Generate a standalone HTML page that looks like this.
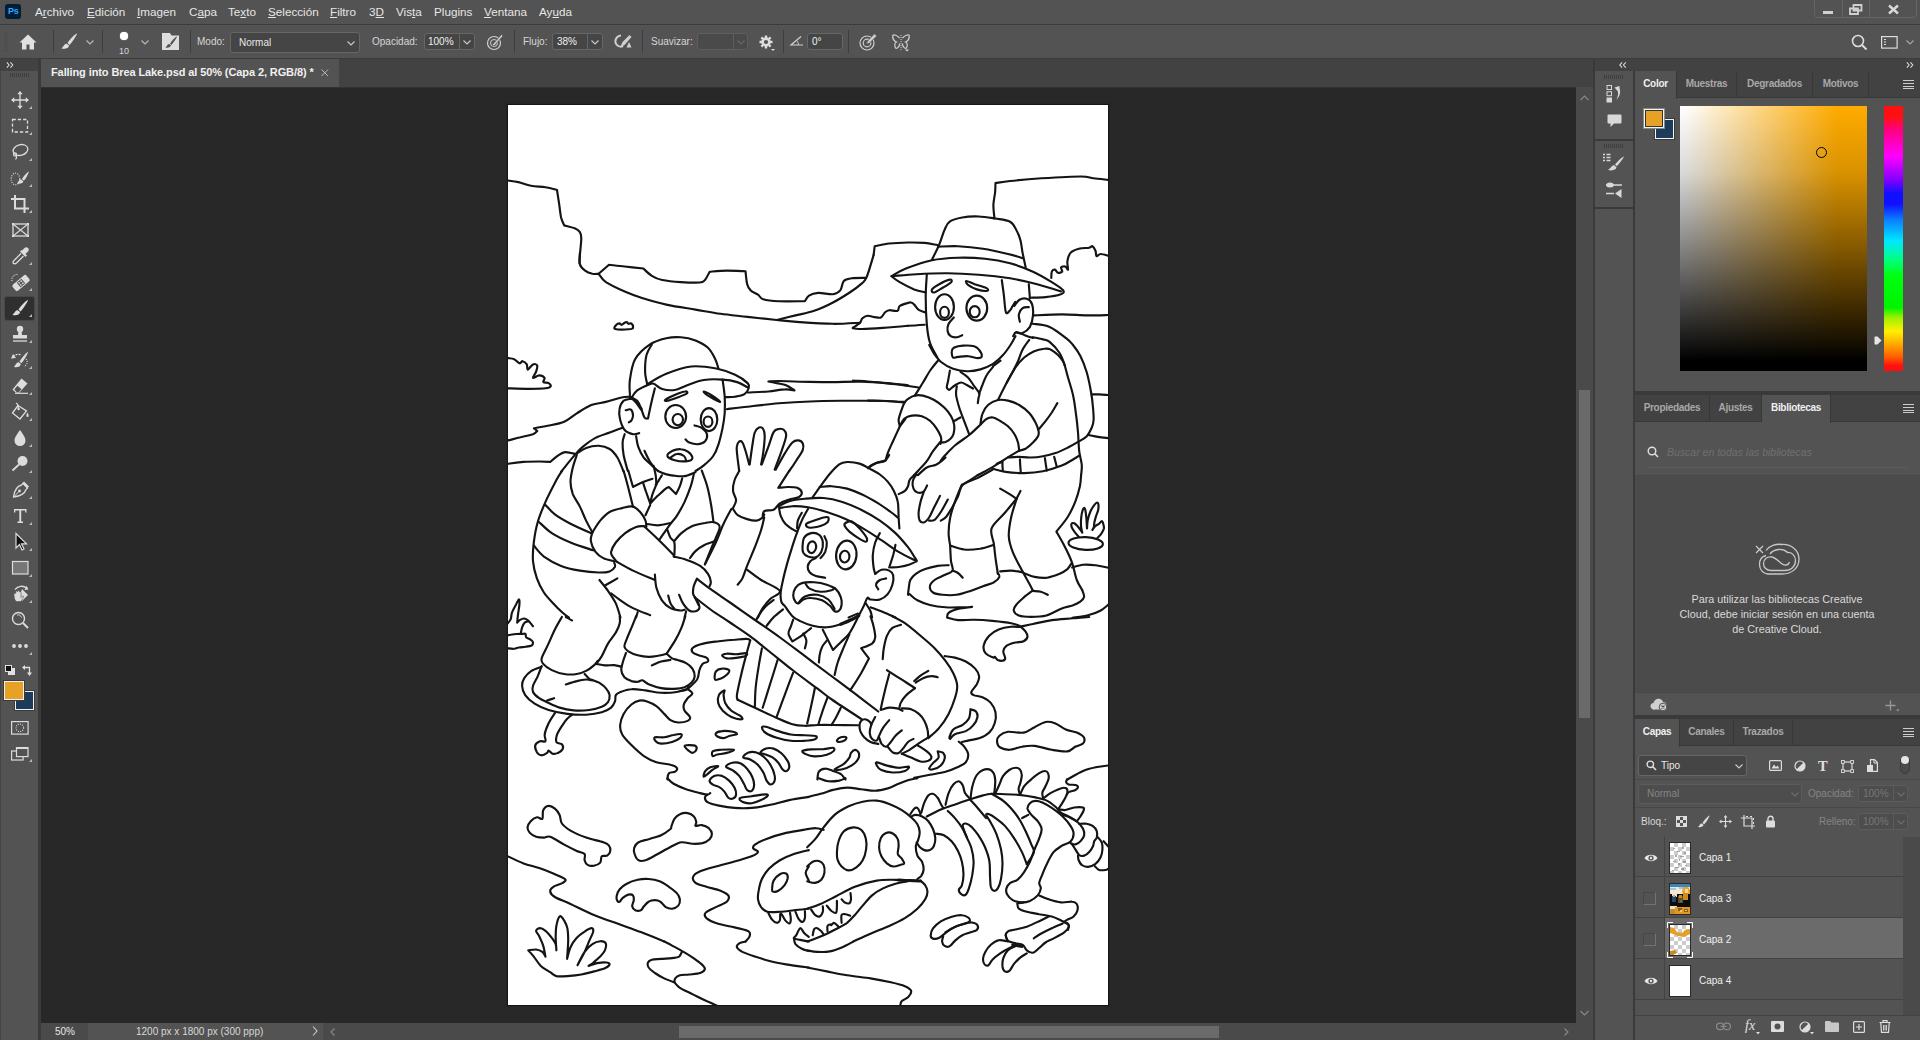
<!DOCTYPE html>
<html lang="es">
<head>
<meta charset="utf-8">
<title>Falling into Brea Lake.psd</title>
<style>
*{box-sizing:border-box;margin:0;padding:0}
html,body{width:1920px;height:1040px;overflow:hidden;background:#535353;font-family:"Liberation Sans",sans-serif;color:#dcdcdc;font-size:11px}
.a{position:absolute}
.t{position:absolute;white-space:nowrap;line-height:1}
#menubar{left:0;top:0;width:1920px;height:24px;background:#535353}
#menubar .t{font-size:11.7px;top:6px;color:#e6e6e6}
#menubar u{text-decoration:underline;text-underline-offset:1px}
#optbar{left:0;top:24px;width:1920px;height:35px;background:#535353;border-top:1px solid #3c3c3c;border-bottom:1px solid #3c3c3c}
#optbar .t{font-size:10px;color:#d6d6d6}
.sep{position:absolute;width:1px;background:#3e3e3e}
.box{position:absolute;background:#454545;border:1px solid #666;border-radius:3px}
#tabbar{left:41px;top:59px;width:1552px;height:28px;background:#424242}
#tab{left:41px;top:59px;width:298px;height:28px;background:#535353}
#canvasbg{left:41px;top:87px;width:1535px;height:936px;background:#282828}
#toolbar{left:0;top:59px;width:38px;height:981px;background:#535353}
#tbgap{left:38px;top:59px;width:3px;height:981px;background:#3a3a3a}
#statusbar{left:41px;top:1023px;width:1552px;height:17px;background:#4a4a4a}
#vscroll{left:1576px;top:87px;width:17px;height:936px;background:#4a4a4a}
#dockgap{left:1593px;top:59px;width:2px;height:981px;background:#3a3a3a}
#dockhead{left:1595px;top:59px;width:325px;height:12px;background:#424242}
#iconstrip{left:1595px;top:71px;width:38px;height:969px;background:#535353}
#stripgap{left:1633px;top:71px;width:2px;height:969px;background:#3a3a3a}
.panel{position:absolute;left:1635px;width:285px;background:#535353}
.ptabs{position:absolute;left:1635px;width:285px;height:27px;background:#424242;border-bottom:1px solid #383838}
.ptab{position:absolute;top:0;height:27px;font-weight:bold;font-size:10px;letter-spacing:-0.3px;color:#a8a8a8;line-height:26px;text-align:center;border-right:1px solid #383838;white-space:nowrap}
.ptab.on{background:#535353;color:#f0f0f0;height:28px}
.hamb{position:absolute;right:6px;top:9px;width:11px;height:9px;border-top:1px solid #ccc;border-bottom:1px solid #ccc}
.hamb:before{content:"";position:absolute;left:0;right:0;top:2px;height:1px;background:#ccc}
.hamb:after{content:"";position:absolute;left:0;right:0;top:5px;height:1px;background:#ccc}
svg{position:absolute;overflow:visible}
</style>
</head>
<body>
<div id="menubar" class="a">
<div class="a" style="left:5px;top:4px;width:16px;height:15px;background:#001e36;border-radius:3px"></div>
<div class="t" style="left:8px;top:7px;font-size:9px;font-weight:bold;color:#31a8ff;letter-spacing:-0.3px">Ps</div>
<div class="t" style="left:35px">A<u>r</u>chivo</div>
<div class="t" style="left:87px"><u>E</u>dición</div>
<div class="t" style="left:137px"><u>I</u>magen</div>
<div class="t" style="left:189px">C<u>a</u>pa</div>
<div class="t" style="left:228px">Te<u>x</u>to</div>
<div class="t" style="left:268px"><u>S</u>elección</div>
<div class="t" style="left:330px"><u>F</u>iltro</div>
<div class="t" style="left:369px">3<u>D</u></div>
<div class="t" style="left:396px">Vis<u>t</u>a</div>
<div class="t" style="left:434px">Plugins</div>
<div class="t" style="left:484px"><u>V</u>entana</div>
<div class="t" style="left:539px">Ay<u>u</u>da</div>
<div class="a" style="left:1814px;top:-4px;width:103px;height:22px;border:1px solid #666;border-radius:4px"></div>
<div class="a" style="left:1842px;top:0;width:1px;height:18px;background:#666"></div>
<div class="a" style="left:1869px;top:0;width:1px;height:18px;background:#666"></div>
<div class="a" style="left:1823px;top:11px;width:10px;height:3px;background:#d0d0d0"></div>
<svg style="left:1849px;top:4px" width="14" height="11" viewBox="0 0 14 11"><path d="M4.5 1h8v5.5h-8zM1 4.5h8v5.500h-8z" fill="#535353" stroke="#d0d0d0" stroke-width="1.8"/></svg>
<svg style="left:1888px;top:5px" width="11" height="9" viewBox="0 0 11 9"><path d="M1 0.500l9 8M10 0.500l-9 8" stroke="#d8d8d8" stroke-width="2.400" fill="none"/></svg>
</div>

<div id="optbar" class="a">
<svg style="left:4px;top:8px" width="4" height="20"><path d="M1 0v20M3 0v20" stroke="#444" stroke-width="1" stroke-dasharray="1 1"/></svg>
<svg style="left:19px;top:9px" width="18" height="16" viewBox="0 0 18 16"><path d="M9 0.500L0.500 8.500H3V15.500H7.500V10.500H10.500V15.500H15V8.500H17.500Z" fill="#e0e0e0"/></svg>
<div class="sep" style="left:53px;top:5px;height:23px"></div>
<svg style="left:61px;top:8px" width="17" height="17" viewBox="0 0 17 17"><path d="M15.500 0.500C12 3 8.500 7 6.500 10L8.500 12C11 9.500 14 5 16 1Z" fill="#ddd"/><path d="M5.800 10.800C3.500 10.500 3 13 0.500 15.500C4 16.500 8 15 8 12.500Z" fill="#ddd"/></svg>
<svg style="left:86px;top:15px" width="8" height="5" viewBox="0 0 8 5"><path d="M0.500 0.500L4 4L7.500 0.500" stroke="#bbb" fill="none" stroke-width="1.100"/></svg>
<div class="sep" style="left:102px;top:5px;height:23px"></div>
<div class="a" style="left:120px;top:7px;width:8px;height:8px;border-radius:50%;background:#fff;box-shadow:0 0 1px #fff"></div>
<div class="t" style="left:119px;top:22px;font-size:9px">10</div>
<svg style="left:141px;top:15px" width="8" height="5" viewBox="0 0 8 5"><path d="M0.500 0.500L4 4L7.500 0.500" stroke="#bbb" fill="none" stroke-width="1.100"/></svg>
<svg style="left:162px;top:8px" width="17" height="17" viewBox="0 0 17 17"><path d="M0 0H8L9.500 2.500H17V17H0Z" fill="#ddd"/><path d="M14.500 3.500C12 5.500 9.500 8 8 10.500L9.500 12C11.500 9.500 13.500 6.500 15 4Z" fill="#535353"/><path d="M7.500 11C5.500 10.800 5.500 12.500 3.500 14.500C6 15.200 9 14 9 12.500Z" fill="#535353"/></svg>
<div class="sep" style="left:190px;top:5px;height:23px"></div>
<div class="t" style="left:197px;top:12px">Modo:</div>
<div class="box" style="left:230px;top:7px;width:130px;height:21px"></div>
<div class="t" style="left:239px;top:13px;color:#e8e8e8">Normal</div>
<svg style="left:347px;top:16px" width="8" height="5" viewBox="0 0 8 5"><path d="M0.500 0.500L4 4L7.500 0.500" stroke="#ccc" fill="none" stroke-width="1.100"/></svg>
<div class="t" style="left:372px;top:12px">Opacidad:</div>
<div class="box" style="left:424px;top:8px;width:51px;height:17px"></div>
<div class="a" style="left:459px;top:9px;width:1px;height:15px;background:#666"></div>
<div class="t" style="left:428px;top:12px;color:#f0f0f0">100%</div>
<svg style="left:463px;top:15px" width="8" height="5" viewBox="0 0 8 5"><path d="M0.500 0.500L4 4L7.500 0.500" stroke="#ccc" fill="none" stroke-width="1.100"/></svg>
<svg style="left:486px;top:8px" width="18" height="18" viewBox="0 0 18 18"><circle cx="8" cy="10" r="6.500" fill="none" stroke="#d0d0d0" stroke-width="1.200"/><circle cx="8" cy="10" r="3.500" fill="none" stroke="#d0d0d0" stroke-width="1"/><path d="M6 12L15.500 1.500L17 3L8 13Z" fill="#d0d0d0" stroke="#535353" stroke-width="0.800"/></svg>
<div class="sep" style="left:514px;top:5px;height:23px"></div>
<div class="t" style="left:523px;top:12px">Flujo:</div>
<div class="box" style="left:552px;top:8px;width:51px;height:17px"></div>
<div class="a" style="left:587px;top:9px;width:1px;height:15px;background:#666"></div>
<div class="t" style="left:557px;top:12px;color:#f0f0f0">38%</div>
<svg style="left:591px;top:15px" width="8" height="5" viewBox="0 0 8 5"><path d="M0.500 0.500L4 4L7.500 0.500" stroke="#ccc" fill="none" stroke-width="1.100"/></svg>
<svg style="left:613px;top:8px" width="20" height="18" viewBox="0 0 20 18"><path d="M8 2.500C3 3 1 8 3.500 11.500C5 13.500 8 14 10 13" fill="none" stroke="#d0d0d0" stroke-width="2"/><path d="M7 15L9.500 9L16.500 2L18.500 4L12 11.500Z" fill="#d0d0d0"/><path d="M16 9L18.500 14.500H13.500Z" fill="#d0d0d0"/></svg>
<div class="sep" style="left:642px;top:5px;height:23px"></div>
<div class="t" style="left:651px;top:12px">Suavizar:</div>
<div class="a" style="left:697px;top:8px;width:51px;height:17px;background:#4a4a4a;border:1px solid #5e5e5e;border-radius:3px"></div>
<div class="a" style="left:733px;top:9px;width:1px;height:15px;background:#5e5e5e"></div>
<svg style="left:737px;top:15px" width="8" height="5" viewBox="0 0 8 5"><path d="M0.500 0.500L4 4L7.500 0.500" stroke="#666" fill="none" stroke-width="1.100"/></svg>
<svg style="left:759px;top:10px" width="16" height="16" viewBox="0 0 16 16"><g transform="translate(7 7)"><circle r="3.400" fill="none" stroke="#ddd" stroke-width="2.600"/><g stroke="#ddd" stroke-width="2.400"><path d="M0 -6.500V-4M0 6.500V4M-6.500 0H-4M6.500 0H4M-4.600 -4.600L-3 -3M4.600 4.600L3 3M-4.600 4.600L-3 3M4.600 -4.600L3 -3"/></g></g><path d="M12 14h4l-2 2z" fill="#ddd"/></svg>
<div class="sep" style="left:783px;top:5px;height:23px"></div>
<svg style="left:790px;top:11px" width="14" height="10" viewBox="0 0 14 10"><path d="M11 0.500L1 9H13" fill="none" stroke="#d0d0d0" stroke-width="1.200"/><path d="M6.500 4.500C8 5.500 8.500 7.500 8.300 9" fill="none" stroke="#d0d0d0" stroke-width="1"/></svg>
<div class="box" style="left:807px;top:8px;width:36px;height:17px"></div>
<div class="t" style="left:812px;top:12px;color:#f0f0f0">0°</div>
<div class="sep" style="left:848px;top:5px;height:23px"></div>
<svg style="left:859px;top:8px" width="19" height="18" viewBox="0 0 19 18"><circle cx="8" cy="10" r="7" fill="none" stroke="#d0d0d0" stroke-width="1.200"/><circle cx="8" cy="10" r="3.800" fill="none" stroke="#d0d0d0" stroke-width="1.200"/><path d="M7 11.500L8.500 8L15.500 0.800L17.800 3L10.500 10Z" fill="#d0d0d0" stroke="#535353" stroke-width="0.800"/></svg>
<svg style="left:892px;top:9px" width="18" height="18" viewBox="0 0 18 18"><path d="M7.500 4C5 1 2 0.500 0.800 1.200C0.500 4 2 7 4.500 8C2.500 9 2 12 4 14.500C6 14.500 7.500 12 7.500 9.500" fill="none" stroke="#d0d0d0" stroke-width="1.200"/><path d="M10.500 4C13 1 16 0.500 17.200 1.200C17.500 4 16 7 13.500 8C15.500 9 16 12 14 14.500C12 14.500 10.500 12 10.500 9.500" fill="none" stroke="#d0d0d0" stroke-width="1.200"/><path d="M9 1V16" stroke="#d0d0d0" stroke-width="1" stroke-dasharray="1 1"/><path d="M13 15.500h4l-2 2z" fill="#ddd"/></svg>
<svg style="left:1851px;top:9px" width="17" height="17" viewBox="0 0 17 17"><circle cx="7" cy="7" r="5.500" fill="none" stroke="#ddd" stroke-width="1.600"/><path d="M11 11L15.500 15.500" stroke="#ddd" stroke-width="2"/></svg>
<svg style="left:1881px;top:11px" width="17" height="13" viewBox="0 0 17 13"><rect x="0.600" y="0.600" width="15.500" height="11.500" fill="none" stroke="#ddd" stroke-width="1.200"/><path d="M3 3.500h2M3 6h2M3 8.500h2" stroke="#ddd" stroke-width="1.200"/></svg>
<svg style="left:1906px;top:15px" width="8" height="5" viewBox="0 0 8 5"><path d="M0.500 0.500L4 4L7.500 0.500" stroke="#aaa" fill="none" stroke-width="1.100"/></svg>
</div>

<div id="tabbar" class="a"></div>
<div id="tab" class="a"></div>
<div class="t" id="tabtitle" style="left:51px;top:67px;font-size:11px;font-weight:bold;color:#f0f0f0;letter-spacing:-0.1px">Falling into Brea Lake.psd al 50% (Capa 2, RGB/8) *</div>
<svg style="left:321px;top:69px" width="8" height="8" viewBox="0 0 8 8"><path d="M0.500 0.500L7 7M7 0.500L0.500 7" stroke="#bbb" stroke-width="1" fill="none"/></svg>

<div id="toolbar" class="a"></div>
<div class="a" style="left:0;top:59px;width:1px;height:981px;background:#444"></div>
<div id="tbgap" class="a"></div>
<div class="a" style="left:0;top:59px;width:38px;height:12px;background:#424242"></div>
<svg style="left:6px;top:62px" width="8" height="6" viewBox="0 0 9 7"><path d="M0.800 0.500L3.500 3.500L0.800 6.500M5 0.500L7.800 3.500L5 6.500" stroke="#e0e0e0" stroke-width="1.200" fill="none"/></svg>
<svg style="left:10px;top:73px" width="20" height="4"><path d="M0.500 0v4M2.500 0v4M4.500 0v4M6.500 0v4M8.500 0v4M10.500 0v4M12.500 0v4M14.500 0v4M16.500 0v4M18.500 0v4" stroke="#3f3f3f" stroke-width="1"/></svg>
<div class="a" style="left:4px;top:296px;width:31px;height:25px;background:#2f2f2f;border:1px solid #484848;border-radius:3px"></div>
<svg style="left:10px;top:90px" width="20" height="20" viewBox="0 0 20 20"><path d="M10 2.500V17.500M2.500 10H17.500" stroke="#dcdcdc" stroke-width="1.300" fill="none"/><path d="M10 1L12.700 4.300H7.300ZM10 19L12.700 15.700H7.300ZM1 10L4.300 7.300V12.700ZM19 10L15.700 7.300V12.700Z" fill="#dcdcdc"/></svg>
<svg style="left:29px;top:106px" width="3" height="3" viewBox="0 0 3 3"><path d="M3 0V3H0Z" fill="#bbb"/></svg>
<svg style="left:10px;top:116px" width="20" height="20" viewBox="0 0 20 20"><rect x="2.500" y="3.500" width="15" height="12.500" fill="none" stroke="#dcdcdc" stroke-width="1.300" stroke-dasharray="3.300 2"/></svg>
<svg style="left:29px;top:132px" width="3" height="3" viewBox="0 0 3 3"><path d="M3 0V3H0Z" fill="#bbb"/></svg>
<svg style="left:10px;top:142px" width="20" height="20" viewBox="0 0 20 20"><ellipse cx="10.500" cy="8" rx="7.500" ry="5.300" transform="rotate(-15 10.500 8)" fill="none" stroke="#dcdcdc" stroke-width="1.300"/><circle cx="5" cy="12.500" r="1.600" fill="none" stroke="#dcdcdc" stroke-width="1.100"/><path d="M6 13.500C7 15 6.500 16.500 5.500 17.500" stroke="#dcdcdc" stroke-width="1.100" fill="none"/></svg>
<svg style="left:29px;top:158px" width="3" height="3" viewBox="0 0 3 3"><path d="M3 0V3H0Z" fill="#bbb"/></svg>
<svg style="left:10px;top:168px" width="20" height="20" viewBox="0 0 20 20"><ellipse cx="5.500" cy="11" rx="4.300" ry="5.800" fill="none" stroke="#dcdcdc" stroke-width="1.200" stroke-dasharray="1 1.300"/><path d="M18.500 3.500C16 5.500 13.500 8.500 12 11L13.800 12.800C15.800 10.500 17.800 7 18.800 4Z" fill="#dcdcdc"/><path d="M11.300 11.600C9 11.300 9 13.500 7 15.500C10 16.500 13.500 15 13.300 13.500Z" fill="#dcdcdc"/></svg>
<svg style="left:29px;top:184px" width="3" height="3" viewBox="0 0 3 3"><path d="M3 0V3H0Z" fill="#bbb"/></svg>
<svg style="left:10px;top:194px" width="20" height="20" viewBox="0 0 20 20"><path d="M5 1V14.500H19M1 5H14.500V19" fill="none" stroke="#dcdcdc" stroke-width="2"/></svg>
<svg style="left:29px;top:210px" width="3" height="3" viewBox="0 0 3 3"><path d="M3 0V3H0Z" fill="#bbb"/></svg>
<svg style="left:10px;top:220px" width="20" height="20" viewBox="0 0 20 20"><rect x="3" y="4" width="15" height="12" fill="none" stroke="#dcdcdc" stroke-width="1.300"/><path d="M3 4L18 16M18 4L3 16" stroke="#dcdcdc" stroke-width="1.100"/><rect x="2" y="3" width="2" height="2" fill="#dcdcdc"/><rect x="17" y="3" width="2" height="2" fill="#dcdcdc"/><rect x="2" y="15" width="2" height="2" fill="#dcdcdc"/><rect x="17" y="15" width="2" height="2" fill="#dcdcdc"/></svg>
<svg style="left:10px;top:246px" width="20" height="20" viewBox="0 0 20 20"><path d="M11 7.500L4 14.500C3 15.500 3 17 3.500 17.500C4.500 18 5.500 17.800 6.500 17L13.500 10" fill="none" stroke="#dcdcdc" stroke-width="1.300"/><path d="M10 5.500L15.500 11L17 9.500L15.500 8L18 5.500C19 4.500 19 3 18 2C17 1 15.500 1 14.500 2L12 4.500L11.500 4Z" fill="#dcdcdc"/></svg>
<svg style="left:29px;top:262px" width="3" height="3" viewBox="0 0 3 3"><path d="M3 0V3H0Z" fill="#bbb"/></svg>
<svg style="left:10px;top:272px" width="20" height="20" viewBox="0 0 20 20"><g transform="rotate(-40 11 11)"><rect x="2" y="7" width="18" height="8" rx="2" fill="#dcdcdc"/><rect x="8" y="8" width="6" height="6" fill="#535353"/><circle cx="9.700" cy="9.700" r="0.900" fill="#dcdcdc"/><circle cx="12.300" cy="9.700" r="0.900" fill="#dcdcdc"/><circle cx="9.700" cy="12.300" r="0.900" fill="#dcdcdc"/><circle cx="12.300" cy="12.300" r="0.900" fill="#dcdcdc"/></g><path d="M2 9C1.500 5 4 2 8.500 2.500" fill="none" stroke="#dcdcdc" stroke-width="1.100" stroke-dasharray="1 1.200"/></svg>
<svg style="left:29px;top:288px" width="3" height="3" viewBox="0 0 3 3"><path d="M3 0V3H0Z" fill="#bbb"/></svg>
<svg style="left:10px;top:298px" width="20" height="20" viewBox="0 0 20 20"><path d="M17.500 2C14 4.500 10.500 8.500 8.500 11.500L10.500 13.500C13 11 16 6.500 18 2.500Z" fill="#dcdcdc"/><path d="M7.800 12.300C5.500 12 5 14.500 2.500 17C6 18 10 16.500 10 14Z" fill="#dcdcdc"/></svg>
<svg style="left:29px;top:314px" width="3" height="3" viewBox="0 0 3 3"><path d="M3 0V3H0Z" fill="#bbb"/></svg>
<svg style="left:10px;top:324px" width="20" height="20" viewBox="0 0 20 20"><circle cx="10" cy="5" r="3.200" fill="#dcdcdc"/><path d="M8.500 7H11.500L12 11H17V14.500H3V11H8Z" fill="#dcdcdc"/><path d="M3 17H17" stroke="#dcdcdc" stroke-width="1.300"/></svg>
<svg style="left:29px;top:340px" width="3" height="3" viewBox="0 0 3 3"><path d="M3 0V3H0Z" fill="#bbb"/></svg>
<svg style="left:10px;top:350px" width="20" height="20" viewBox="0 0 20 20"><path d="M17.500 2C14.500 4.500 11.500 8.500 9.500 11.500L11.300 13.300C13.500 11 16.300 6.500 18 2.500Z" fill="#dcdcdc"/><path d="M8.800 12.300C6.500 12 6 14.500 4 17C7 18 10.800 16.500 10.800 14Z" fill="#dcdcdc"/><path d="M3 6.500C6 4 9 4 11.500 5" fill="none" stroke="#dcdcdc" stroke-width="1.200" stroke-dasharray="2 1"/><path d="M1 8.500L3 4L6 8Z" fill="#dcdcdc"/><path d="M16 9C18 11 17.500 15 14 16.500" fill="none" stroke="#dcdcdc" stroke-width="1.100" stroke-dasharray="1 1.200"/></svg>
<svg style="left:29px;top:366px" width="3" height="3" viewBox="0 0 3 3"><path d="M3 0V3H0Z" fill="#bbb"/></svg>
<svg style="left:10px;top:376px" width="20" height="20" viewBox="0 0 20 20"><path d="M11.500 2.500L17.500 7.500L9.500 16.500H5.500L2.500 13.500Z" fill="#dcdcdc"/><path d="M4.300 13.500L7.500 9.800L11.500 13.300L9 16H6.500Z" fill="#535353"/><path d="M5 17.300H18" stroke="#dcdcdc" stroke-width="1.200"/></svg>
<svg style="left:29px;top:392px" width="3" height="3" viewBox="0 0 3 3"><path d="M3 0V3H0Z" fill="#bbb"/></svg>
<svg style="left:10px;top:402px" width="20" height="20" viewBox="0 0 20 20"><path d="M8 3.500L16.500 9L10 17L2.500 11Z" fill="none" stroke="#dcdcdc" stroke-width="1.300"/><path d="M6 1.500C7 1 8 2.500 8.500 6.500" fill="none" stroke="#dcdcdc" stroke-width="1.200"/><circle cx="8.600" cy="7" r="1.200" fill="#dcdcdc"/><path d="M17.500 10.500C19 13 19 15 17.500 15C16 15 16 13 17.500 10.500Z" fill="#dcdcdc"/></svg>
<svg style="left:29px;top:418px" width="3" height="3" viewBox="0 0 3 3"><path d="M3 0V3H0Z" fill="#bbb"/></svg>
<svg style="left:10px;top:428px" width="20" height="20" viewBox="0 0 20 20"><path d="M10 2C13 6.500 15.500 9.500 15.500 12.500A5.500 5.500 0 0 1 4.500 12.500C4.500 9.500 7 6.500 10 2Z" fill="#dcdcdc"/></svg>
<svg style="left:29px;top:444px" width="3" height="3" viewBox="0 0 3 3"><path d="M3 0V3H0Z" fill="#bbb"/></svg>
<svg style="left:10px;top:454px" width="20" height="20" viewBox="0 0 20 20"><circle cx="12.500" cy="7" r="5" fill="#dcdcdc"/><path d="M9 10.500L2.500 16.500" stroke="#dcdcdc" stroke-width="1.800"/></svg>
<svg style="left:29px;top:470px" width="3" height="3" viewBox="0 0 3 3"><path d="M3 0V3H0Z" fill="#bbb"/></svg>
<svg style="left:10px;top:480px" width="20" height="20" viewBox="0 0 20 20"><path d="M13 3.500L17.500 8L16 9.500C15 13 11 16 3.500 17C4.500 10 7.500 6 11.500 5Z" fill="none" stroke="#dcdcdc" stroke-width="1.300"/><path d="M14 1.500L19 6.500L17.500 8L12.500 3Z" fill="#dcdcdc"/><circle cx="9.500" cy="11" r="1.400" fill="#dcdcdc"/><path d="M4 16.500L9 11.500" stroke="#dcdcdc" stroke-width="1"/></svg>
<svg style="left:29px;top:496px" width="3" height="3" viewBox="0 0 3 3"><path d="M3 0V3H0Z" fill="#bbb"/></svg>
<svg style="left:10px;top:506px" width="20" height="20" viewBox="0 0 20 20"><path d="M4 3H16.500V6.500H15.200V4.600H11.200V15.500H13V17H7.500V15.500H9.300V4.600H5.300V6.500H4Z" fill="#dcdcdc"/></svg>
<svg style="left:29px;top:522px" width="3" height="3" viewBox="0 0 3 3"><path d="M3 0V3H0Z" fill="#bbb"/></svg>
<svg style="left:10px;top:532px" width="20" height="20" viewBox="0 0 20 20"><path d="M6 1.500V16L9.500 12.500L12 18L14 17L11.500 11.800H16.500Z" fill="#111" stroke="#dcdcdc" stroke-width="1.200"/></svg>
<svg style="left:29px;top:548px" width="3" height="3" viewBox="0 0 3 3"><path d="M3 0V3H0Z" fill="#bbb"/></svg>
<svg style="left:10px;top:558px" width="20" height="20" viewBox="0 0 20 20"><rect x="2.500" y="3.500" width="15.500" height="12.500" fill="#777" stroke="#dcdcdc" stroke-width="1.200"/></svg>
<svg style="left:29px;top:574px" width="3" height="3" viewBox="0 0 3 3"><path d="M3 0V3H0Z" fill="#bbb"/></svg>
<svg style="left:10px;top:584px" width="20" height="20" viewBox="0 0 20 20"><path d="M5 5.500C8 1.500 13.500 1.500 16.500 4" fill="none" stroke="#dcdcdc" stroke-width="1.300"/><path d="M18.500 5.500L14.500 6L16.500 1.800Z" fill="#dcdcdc"/><path d="M12 5L18 11L12 17L9 14" fill="#dcdcdc"/><path d="M4 11.500V9.500Q5 8.500 5.800 9.500V7.500Q6.800 6.500 7.600 7.500V7Q8.600 6 9.400 7V7.800Q10.400 7 11 8V13.500L12.500 12Q13.800 11.800 13.500 13L11 17.500H6Q4 15 4 11.500Z" fill="#dcdcdc" stroke="#535353" stroke-width="0.600"/></svg>
<svg style="left:29px;top:600px" width="3" height="3" viewBox="0 0 3 3"><path d="M3 0V3H0Z" fill="#bbb"/></svg>
<svg style="left:10px;top:610px" width="20" height="20" viewBox="0 0 20 20"><circle cx="8.500" cy="8.500" r="6" fill="none" stroke="#dcdcdc" stroke-width="1.400"/><path d="M13 13L18 18" stroke="#dcdcdc" stroke-width="2"/><path d="M7 5C9 4.500 11 5.500 11.500 7.500" fill="none" stroke="#dcdcdc" stroke-width="0.900"/></svg>
<svg style="left:10px;top:636px" width="20" height="20" viewBox="0 0 20 20"><circle cx="4" cy="10" r="1.900" fill="#dcdcdc"/><circle cx="10" cy="10" r="1.900" fill="#dcdcdc"/><circle cx="16" cy="10" r="1.900" fill="#dcdcdc"/></svg>
<svg style="left:29px;top:652px" width="3" height="3" viewBox="0 0 3 3"><path d="M3 0V3H0Z" fill="#bbb"/></svg>
<div class="a" style="left:8px;top:668px;width:7px;height:7px;background:#e0e0e0"></div>
<div class="a" style="left:5px;top:665px;width:7px;height:7px;background:#111;border:1px solid #e0e0e0"></div>
<svg style="left:22px;top:665px" width="11" height="11" viewBox="0 0 11 11"><path d="M2.500 2.500H7.500V8" fill="none" stroke="#e0e0e0" stroke-width="1.300"/><path d="M0 2.500L3 0V5ZM7.500 11L5 7.500H10Z" fill="#e0e0e0"/></svg>
<div class="a" style="left:15px;top:691px;width:19px;height:19px;background:#1d3c5c;border:1px solid #f0f0f0;box-shadow:0 0 0 1px #3a3a3a"></div>
<div class="a" style="left:4px;top:681px;width:20px;height:19px;background:#e8a127;border:1px solid #f0f0f0;box-shadow:0 0 0 1px #3a3a3a"></div>
<svg style="left:11px;top:721px" width="18" height="14" viewBox="0 0 18 14"><rect x="0.600" y="0.600" width="16.500" height="12.500" fill="none" stroke="#dcdcdc" stroke-width="1.200"/><circle cx="8.800" cy="6.800" r="3.800" fill="none" stroke="#dcdcdc" stroke-width="1.100" stroke-dasharray="1 1.200"/></svg>
<svg style="left:11px;top:747px" width="18" height="14" viewBox="0 0 18 14"><rect x="0.600" y="4" width="11.500" height="9" fill="none" stroke="#dcdcdc" stroke-width="1.200"/><rect x="5.500" y="0.600" width="11.500" height="9" fill="#535353" stroke="#dcdcdc" stroke-width="1.200"/><path d="M5.500 1.200H17" stroke="#dcdcdc" stroke-width="1.600"/></svg>
<svg style="left:29px;top:759px" width="3" height="3" viewBox="0 0 3 3"><path d="M3 0V3H0Z" fill="#bbb"/></svg>

<div id="canvasbg" class="a"></div>
<div class="a" style="left:41px;top:87px;width:1552px;height:1px;background:#323232"></div>
<div class="a" style="left:507px;top:104px;width:602px;height:902px;background:#161616;box-shadow:0 0 2px #1c1c1c"></div>
<div class="a" style="left:508px;top:105px;width:600px;height:900px;background:#fff;overflow:hidden">
<svg width="600" height="900" viewBox="0 0 600 900" style="left:0;top:0" fill="none" stroke="#141414" stroke-width="2.15" stroke-linecap="round" stroke-linejoin="round">
<path d="M-1 75.4C0.9 75.7 6.4 76.2 10.4 77.1C14.4 78 18.4 80 22.9 80.8C27.4 81.7 33.2 81.6 37.5 82.3C41.8 83 47 84.5 49 85C49.3 87.2 50.3 93.3 51 97.9C51.7 102.5 52.3 108.8 53.1 112.5C54 116.2 55.7 119.1 56.2 120.4C58 120.9 64.1 122.2 66.7 123.3C69.3 124.4 70.8 125.4 71.9 127.1C73 128.8 73.3 129.5 73.3 133.3C73.3 137.2 72.2 145.8 71.9 150C71.6 154.2 71.5 156.9 71.5 158.3"/>
<path d="M424 154.6C425.2 152.1 429.2 144.5 431.2 139.6C433.3 134.7 434.7 128.8 436.5 125C438.2 121.2 438.7 118.8 441.7 116.7C444.6 114.6 449.3 113.4 454.2 112.5C459 111.6 465.3 111.3 470.8 111.5C476.4 111.6 482.3 112.7 487.5 113.5C492.7 114.4 498.6 114.8 502.1 116.7C505.6 118.6 506.6 121.9 508.3 125C510.1 128.1 511.5 131.6 512.5 135.4C513.5 139.2 513.7 143.4 514.6 147.9C515.5 152.4 517.2 160.1 517.7 162.5"/>
<path d="M430.2 141.7C433.5 141.6 442.5 140.9 450 141.2C457.5 141.6 466.7 142.5 475 143.8C483.3 145 493.4 147.4 500 149C506.6 150.5 512.2 152.4 514.6 153.1"/>
<path d="M417.7 187.5C415.8 187 410.6 186.1 406.2 184.4C401.9 182.6 395.5 179.3 391.7 177.1C387.8 174.9 384.7 172.2 383.3 171.2C385.8 170 391.1 166.2 397.9 163.5C404.7 160.9 415.3 157 424 155.2C432.6 153.4 441.1 153 450 152.7C458.9 152.5 468.4 152.8 477.1 153.8C485.8 154.7 494.1 156.2 502.1 158.3C510.1 160.5 518.1 163.5 525 166.7C531.9 169.8 538.7 174 543.8 177.1C548.8 180.2 553.8 183.3 555.2 185.4C556.6 187.5 555 188.5 552.1 189.6C549.1 190.7 542.5 191.6 537.5 192.1C532.5 192.6 524.5 192.6 521.9 192.7"/>
<path d="M384.4 171.2C388.4 170.9 399.1 169.7 408.3 169.2C417.5 168.7 429.2 168.2 439.6 168.3C450 168.4 460.4 169 470.8 169.8C481.3 170.6 492.4 171.8 502.1 173.3C511.8 174.9 520.7 177 529.2 179.2C537.7 181.4 549.1 185.2 553.1 186.5"/>
<path d="M365.6 150C365.8 148.5 366.5 142.7 366.7 141.2C369.1 140.8 375.7 139.2 381.2 138.5C386.8 137.9 394.1 137.6 400 137.5C405.9 137.4 411.8 137.5 416.7 137.9C421.5 138.3 427.1 139.7 429.2 140"/>
<path d="M486.5 113.5C486.3 111.3 485.3 104.3 485.4 100C485.5 95.7 486.7 91.1 487.1 87.5C487.4 83.9 487.4 79.7 487.5 78.1C489.9 77.8 494.4 76.8 502.1 76C509.7 75.2 521.5 74.1 533.3 73.3C545.1 72.6 564.2 71.5 572.9 71.5C581.6 71.5 580.7 72.7 585.4 73.3C590.1 73.9 598.4 74.7 601 75"/>
<path d="M543.3 172.9C543.4 171.9 543.2 168.1 543.8 166.7C544.3 165.3 545.8 164.4 546.9 164.6C547.9 164.8 548.8 167.4 550 167.7C551.2 168.1 553.6 167.5 554.2 166.7C554.7 165.8 552.6 163.4 553.1 162.5C553.6 161.6 556.1 161.1 557.3 161.5C558.4 161.8 559.7 165.5 560 164.6C560.3 163.7 559 159 559.4 156.2C559.8 153.5 560.6 150 562.5 147.9C564.4 145.8 567.7 144.6 570.8 143.8C574 142.9 579 143.1 581.2 142.7C583.5 142.3 583.3 140.7 584.4 141.2C585.4 141.8 586.8 144.2 587.5 145.8C588.2 147.5 587.7 150.5 588.5 151C589.4 151.6 590.6 149 592.7 149C594.8 149 599.7 150.7 601 151"/>
<path d="M71.9 147.9C71.9 149.8 71 156.4 71.9 159.4C72.7 162.3 75 164.1 77.1 165.6C79.2 167.2 82.1 168.2 84.4 168.8C86.6 169.3 89.6 168.8 90.6 168.8C92.4 167.3 99.3 161.3 101 159.8C103.6 160.1 110.9 160.8 116.7 161.5C122.4 162.1 132.3 163.2 135.4 163.5C136.8 164.8 140.6 168.9 143.8 170.8C146.9 172.7 149.3 174 154.2 175C159 176 166.7 176.7 172.9 177.1C179.2 177.5 187.7 177.8 191.7 177.5C195.7 177.2 195.2 176.8 196.9 175C198.5 173.2 200.9 168.1 201.7 166.7C204.5 166.5 212.8 165.7 218.8 165.6C224.7 165.6 234.4 166.1 237.5 166.2C237.8 168.4 238.3 176 239.2 179.2C240 182.4 240.9 183.7 242.7 185.4C244.5 187.2 247.9 188.1 250 189.6C252.1 191 251.7 193.1 255.2 194.2C258.7 195.3 263.9 195.9 270.8 196.2C277.8 196.6 292.5 196.2 296.9 196.2C297.6 195.3 298.8 192 301 190.6C303.3 189.2 306.4 188.2 310.4 187.9C314.4 187.7 321.4 189.6 325 189.2C328.6 188.8 330.5 187.6 332.3 185.4C334.1 183.2 333.9 178.1 335.8 176C337.7 174 340.2 173.9 343.8 173.3C347.3 172.8 355 173 357.3 172.9"/>
<path d="M90.6 168.8C91.8 170.1 93.6 174.1 97.9 177.1C102.3 180 110.8 183.9 116.7 186.5C122.6 189.1 126.4 190.5 133.3 192.7C140.3 194.9 149.3 197.6 158.3 199.6C167.4 201.6 178.5 203.1 187.5 204.6C196.5 206.1 203.8 207.5 212.5 208.8C221.2 210 230.2 210.8 239.6 211.9C249 212.9 260.1 214.1 268.8 215C277.4 215.9 282.3 216.5 291.7 217.1C301 217.7 314.9 218.6 325 218.8C335.1 218.9 347.6 217.9 352.1 217.7"/>
<path d="M268.8 215C271.9 214.2 281.2 211.9 287.5 210.4C293.8 208.9 300 208 306.2 205.8C312.5 203.7 319.1 200.6 325 197.5C330.9 194.4 336.8 190.7 341.7 187.5C346.5 184.3 351.4 180.6 354.2 178.1C356.9 175.7 356.9 175.9 358.3 172.9C359.7 170 361.3 164.2 362.5 160.4C363.7 156.6 365.1 151.7 365.6 150"/>
<path d="M107.3 224C104.9 223.3 107.6 220.7 108.3 219.8C109 218.9 110.6 218.3 111.5 218.3C112.3 218.3 112.7 219.9 113.5 219.8C114.4 219.7 115.8 218.2 116.7 217.7C117.5 217.3 118.1 216.9 118.8 217.1C119.4 217.3 119.7 218.5 120.4 218.8C121.2 219 122.6 217.8 123.3 218.3C124.1 218.9 125.1 220.9 125 221.9C124.9 222.8 125.9 223.6 122.9 224C120 224.3 109.7 224.7 107.3 224Z"/>
<path d="M344.8 222.9C346 222 350.5 219.3 352.1 217.7C353.6 216.1 353 214.7 354.2 213.5C355.4 212.4 357.3 211.1 359.4 210.8C361.5 210.6 364.4 211.8 366.7 212.1C368.9 212.4 371.2 213.3 372.9 212.5C374.7 211.7 375.7 208.5 377.1 207.3C378.5 206.1 379.2 205.5 381.2 205.2C383.3 205 387.8 206.5 389.6 205.8C391.3 205.1 389.9 202.4 391.7 201C393.4 199.7 398.6 198.4 400 197.9"/>
<path d="M344.8 223.3C346.4 223.4 349.1 224 354.2 224C359.2 223.9 367.4 223.4 375 222.9C382.6 222.4 395.8 221.2 400 220.8"/>
<path d="M0 253.1C1 253.3 4.3 253.3 6.2 254.2C8.2 255 10.1 258 11.5 258.3C12.8 258.7 13.4 256.1 14.6 256.2C15.8 256.4 17.9 258 18.8 259.4C19.6 260.8 18.8 264.6 19.8 264.6C20.8 264.6 23.4 260.1 25 259.4C26.6 258.7 28.6 259.2 29.2 260.4C29.7 261.6 28.8 264.6 28.1 266.7C27.4 268.8 24.5 272.3 25 272.9C25.5 273.5 29.3 270.4 31.2 270.4C33.2 270.4 35.8 271.8 36.5 272.9C37.2 274 34.7 276.2 35.4 277.1C36.1 278 39.4 277.4 40.6 278.1C41.8 278.8 43.2 280.4 42.7 281.2C42.2 282.1 41.1 282.9 37.5 283.3C33.9 283.8 27.1 283.8 20.8 283.8C14.6 283.8 3.5 283.4 0 283.3"/>
<path d="M121.9 289.6C121.9 287.2 121 280.9 121.9 275C122.7 269.1 123.8 260.1 127.1 254.2C130.4 248.3 136.5 243.1 141.7 239.6C146.9 236.1 153.1 234.5 158.3 233.3C163.5 232.1 168.1 231.9 172.9 232.3C177.8 232.6 183 233.7 187.5 235.4C192 237.2 196.7 239.6 200 242.7C203.3 245.8 205.6 250.7 207.3 254.2C209 257.6 209.9 262 210.4 263.5"/>
<path d="M143.8 239.6C142.9 241.3 139.7 245.5 138.5 250C137.4 254.5 137 261.8 137.1 266.7C137.2 271.5 138.8 277.1 139.2 279.2"/>
<path d="M139.2 279.2C142.4 277.4 151 271.7 158.3 268.8C165.7 265.8 175 262.3 183.3 261.5C191.7 260.6 201 262.2 208.3 263.5C215.6 264.9 221.9 267.4 227.1 269.8C232.3 272.2 237.3 275.9 239.6 278.1C241.8 280.4 241.1 281.5 240.6 283.3C240.1 285.2 238.7 287.8 236.5 289.2C234.2 290.6 230.2 291.2 227.1 291.7C224 292.2 219.3 292 217.7 292.1"/>
<path d="M122.9 293.8C124 292.4 126 287.8 129.2 285.4C132.3 283 138.9 280.3 141.7 279.2C144.4 278.1 143.8 278 145.8 278.8C147.9 279.5 150.7 282.9 154.2 284C157.6 285 162.5 285.6 166.7 285C170.8 284.4 174.3 281.9 179.2 280.2C184 278.5 189.9 275.9 195.8 275C201.7 274.1 209 274.2 214.6 274.6C220.1 274.9 225 275.8 229.2 277.1C233.3 278.4 237.8 281.4 239.6 282.3"/>
<path d="M214.6 274.6C214.9 277.4 216.3 286 216.7 291.7C217 297.3 217 303.1 216.7 308.3C216.3 313.5 215.6 317.7 214.6 322.9C213.5 328.1 212 334.9 210.4 339.6C208.9 344.3 207.6 347.6 205.2 351C202.8 354.5 198.8 357.9 195.8 360.4C192.9 362.9 188.9 365.1 187.5 366"/>
<path d="M128.1 331.2C128.5 333 129 338.2 130.2 341.7C131.4 345.1 133.2 349 135.4 352.1C137.7 355.2 141.3 358.1 143.8 360.4C146.2 362.7 149 365.1 150 366"/>
<path d="M122.9 293.8C121.7 294.1 117.5 294.1 115.6 295.8C113.7 297.6 112 301 111.5 304.2C110.9 307.3 111.2 311.1 112.1 314.6C113 318.1 114.5 322.6 116.7 325C118.8 327.4 122.6 328.6 125 329.2C127.4 329.7 130.2 328.3 131.2 328.1"/>
<path d="M117.7 305.2C118.6 305.1 121.7 303.7 122.9 304.6C124.1 305.5 124.9 308.6 125 310.4C125.1 312.3 124 314.5 123.3 315.6C122.6 316.8 121.3 317 120.8 317.3"/>
<path d="M121.9 291.7C123.1 292.4 127.3 293.8 129.2 295.8C131.1 297.9 132.1 301.4 133.3 304.2C134.5 306.9 135.3 310.9 136.5 312.5C137.6 314.1 139.4 313.4 140 313.5C140.6 310.6 142.6 300.9 143.8 295.8C144.9 290.8 146.4 285.4 146.9 283.3"/>
<path d="M121.9 291.7C122.9 292.5 126.2 294.8 128.1 296.9C130 299 132.5 303 133.3 304.2" stroke-width="3"/>
<path d="M157.3 294.8C158.5 293.8 163.4 291.4 166.7 290C170 288.6 175.1 286.7 177.1 286.5C179.1 286.2 180.1 287.5 178.8 288.5C177.4 289.6 172 291.5 168.8 292.7C165.5 293.9 161.3 295.5 159.4 295.8C157.5 296.2 156.1 295.8 157.3 294.8Z"/>
<path d="M195.8 286.5C196.5 286.5 200.4 288.3 203.1 290C205.8 291.7 211.6 296.2 212.1 296.9C212.6 297.6 208.4 295.3 206.2 294.2C204.1 293 200.7 291.3 199 290C197.2 288.7 195.1 286.5 195.8 286.5Z"/>
<ellipse cx="167.7" cy="311.5" rx="10.4" ry="11.5"/>
<ellipse cx="169.8" cy="314.6" rx="5.2" ry="5.6"/>
<ellipse cx="201" cy="314.6" rx="8.3" ry="11.5"/>
<ellipse cx="200" cy="316.7" rx="4.4" ry="5.2"/>
<path d="M186.5 320.4C187.7 320.8 191.7 321.5 193.8 322.9C195.8 324.4 198.4 326.9 199 329.2C199.5 331.4 198.4 334.8 196.9 336.5C195.3 338.1 192.2 339 189.6 339.2C187 339.3 183.3 338.3 181.2 337.5C179.2 336.7 178.1 334.9 177.5 334.4"/>
<path d="M159.4 351C159 349.5 162.3 347 164.6 345.8C166.8 344.7 170.3 344 172.9 344.2C175.5 344.3 178.3 345.4 180.2 346.9C182.1 348.4 184.5 351.6 184.4 353.1C184.2 354.7 182.1 355.9 179.2 356.2C176.2 356.6 170 356.1 166.7 355.2C163.4 354.3 159.7 352.6 159.4 351Z"/>
<path d="M162.5 352.5C163.5 351.9 166.5 349.2 168.8 349C171 348.7 174.5 349.9 176 351C177.6 352.2 177.8 354.9 178.1 355.6"/>
<path d="M136.5 345.8C137.3 347.6 140.1 353.6 141.7 356.2C143.2 358.9 145.1 360.6 145.8 361.5"/>
<path d="M239.6 287.5C243.1 287.3 254.2 287 260.4 286.5C266.7 285.9 272.7 284.5 277.1 284.4C281.4 284.2 284.9 285.2 286.5 285.4C285.1 284.5 281.1 281.4 278.1 280.2C275.2 279 271.7 278.8 268.8 278.1C265.8 277.5 261.8 276.7 260.4 276.5C262.2 276.4 265.6 276 270.8 276C276 276.1 283 276.5 291.7 276.7C300.3 276.8 312.5 277.1 322.9 277.1C333.3 277.1 343.8 276.4 354.2 276.7C364.6 276.9 377.8 278.2 385.4 278.8C393.1 279.3 397.6 280 400 280.2"/>
<path d="M218.8 304.2C222.2 303.8 230.9 302.6 239.6 301.7C248.3 300.7 260.4 299.2 270.8 298.3C281.3 297.5 291.7 296.9 302.1 296.5C312.5 296 322.9 295.9 333.3 295.8C343.8 295.7 354.2 295.7 364.6 295.8C375 296 390.6 296.7 395.8 296.9"/>
<path d="M0 335.4C2.1 334.9 8.3 333.3 12.5 332.3C16.7 331.2 22.2 330.2 25 329.2C27.8 328.1 28.5 326.6 29.2 326C28.6 325.6 26.6 323.8 26 323.3C28.3 322.9 34.5 321.9 39.6 320.8C44.6 319.7 51.4 318.8 56.2 316.7C61.1 314.6 64.2 311.1 68.8 308.3C73.3 305.6 78.5 301.9 83.3 300C88.2 298.1 93.1 298.1 97.9 296.9C102.8 295.7 108.5 293.6 112.5 292.7C116.5 291.8 120.3 291.8 121.9 291.7"/>
<path d="M0 358.8C2.6 358.4 10.4 357.3 15.6 356.9C20.8 356.5 26.8 356.5 31.2 356.5C35.7 356.5 40.5 356.8 42.3 356.9C43.6 355.8 47.5 352.3 50 350.6C52.5 349 54.2 347.4 57.1 347.1C60 346.8 65.6 348.6 67.3 349"/>
<path d="M114.8 322.7C112.6 323.5 106.2 325.8 101.7 327.5C97.1 329.2 91.9 330.6 87.5 332.9C83.1 335.3 78.4 338.9 75 341.7C71.6 344.4 70.9 345.2 67.3 349.4C63.6 353.5 55.5 363.8 53.1 366.7"/>
<path d="M68.8 348.5C70.3 347.6 74.5 344.2 78.1 342.9C81.8 341.6 86.7 340.7 90.6 340.8C94.5 341 98.5 342 101.7 344C104.8 345.9 107 348.7 109.4 352.5C111.7 356.3 114.6 364.3 115.6 366.7"/>
<path d="M116.7 329.2C116.3 330.6 114.8 334 114.6 337.5C114.4 341 114.8 345.2 115.6 350C116.5 354.8 119.1 363.4 119.8 366"/>
<path d="M231.2 366C230.9 363.4 229.6 354.1 229.2 350C228.8 345.9 228.4 343.9 228.8 341.7C229.1 339.4 230.3 337.2 231.2 336.5C232.2 335.8 233.3 335.9 234.4 337.5C235.4 339.1 236.4 342.2 237.5 345.8C238.6 349.5 240.6 357.1 241.2 359.4"/>
<path d="M241.7 359.4C242.2 355.7 243.9 342.9 244.8 337.5C245.7 332.1 245.8 329.6 246.9 327.1C247.9 324.6 249.7 323 251 322.5C252.4 322 254.3 322.5 255.2 324C256.1 325.4 256.7 327.3 256.7 331.2C256.7 335.2 255.8 343.2 255.2 347.9C254.6 352.6 253.5 357.5 253.1 359.4"/>
<path d="M253.8 359.4C254.9 356.4 258.4 347 260.4 341.7C262.4 336.3 263.9 330 265.6 327.1C267.4 324.1 269.1 324.3 270.8 324C272.6 323.6 274.8 323.8 276 325C277.3 326.2 278.6 327.4 278.1 331.2C277.6 335.1 274.8 342.4 272.9 347.9C271 353.5 267.7 361.8 266.7 364.6"/>
<path d="M267.7 364.6C269.3 361.8 274.3 352.4 277.1 347.9C279.9 343.4 282.1 339.6 284.4 337.5C286.6 335.4 288.9 335.2 290.6 335.4C292.4 335.6 294.1 337 294.8 338.5C295.5 340.1 295.8 342 294.8 344.8C293.8 347.6 290.8 351.7 288.5 355.2C286.3 358.8 282.5 364.2 281.2 366"/>
<path d="M400 197.9C400.5 197.8 402.1 197.2 403.1 197.5C404.2 197.8 405 198.4 406.2 199.6C407.5 200.8 408.7 203.3 410.4 204.6C412.2 205.9 415.6 206.8 416.7 207.3"/>
<path d="M400 220.8C402.8 220.7 413.9 220 416.7 219.8"/>
<path d="M418.8 169.8C418.6 173.4 417.7 183.5 417.7 191.7C417.7 199.8 418.1 211.1 418.8 218.8C419.4 226.4 420.1 231.9 421.9 237.5C423.6 243.1 428 249.7 429.2 252.1"/>
<path d="M505.2 231.2C505.7 230.6 506.4 227.3 508.3 227.1C510.2 226.9 513.9 229.2 516.7 230.2C519.4 231.2 523.6 232.5 525 232.9"/>
<path d="M506.2 201C507.1 200 509.4 196 511.5 194.8C513.5 193.6 516.7 193.1 518.8 193.8C520.8 194.4 522.9 196.2 524 199C525 201.7 525.3 206.6 525 210.4C524.7 214.2 523.6 218.9 521.9 221.9C520.1 224.8 516.8 227.2 514.6 228.1C512.3 229.1 509.4 227.6 508.3 227.5"/>
<path d="M520.8 202.1C519.8 202.3 516.2 201.9 514.6 203.1C512.9 204.3 511.3 207.1 510.8 209.4C510.4 211.6 511.7 215.5 511.9 216.7"/>
<path d="M493.8 175C494.1 177.4 495.1 184.2 495.8 189.6C496.5 195 496.9 204.7 497.9 207.3C499 209.9 501 206.2 502.1 205.2C503.2 204.2 503.7 202.4 504.6 201C505.5 199.7 506.8 197.6 507.3 196.9"/>
<path d="M520.8 179.2C521 181.5 521.7 191 521.9 193.3"/>
<path d="M424 184.4C424.8 183 428.3 180.8 431.2 179.2C434.2 177.5 439.7 174.9 441.7 174.6C443.7 174.2 444.4 175.8 443.3 177.1C442.3 178.4 438.3 180.6 435.4 182.3C432.5 184 428 187.2 426 187.5C424.1 187.8 423.1 185.8 424 184.4Z"/>
<path d="M458.3 176C459.4 175.9 463.4 178 466.7 179.2C470 180.3 476 181.8 478.1 182.9C480.2 184 480.7 185.6 479.2 185.8C477.6 186.1 471.9 185.3 468.8 184.4C465.6 183.4 462.2 181.6 460.4 180.2C458.7 178.8 457.3 176.2 458.3 176Z"/>
<ellipse cx="436.5" cy="202.1" rx="9.4" ry="12.9"/>
<ellipse cx="436.5" cy="207.3" rx="4.4" ry="5.6"/>
<ellipse cx="468.8" cy="203.1" rx="10.4" ry="12.5"/>
<ellipse cx="466.7" cy="206.7" rx="5" ry="5.6"/>
<path d="M445.8 212.5C445 213.5 441.7 216.5 440.6 218.8C439.6 221 439.2 224 439.6 226C439.9 228.1 441.1 230.2 442.7 231.2C444.3 232.3 447 232.5 449 232.3C450.9 232.1 453.3 230.6 454.2 230.2"/>
<path d="M526 210.4C530.7 210.2 545.3 209.4 554.2 209.4C563 209.4 571.5 210.3 579.2 210.4C586.8 210.5 596.5 210.1 600 210"/>
<path d="M421.2 240C422.1 241.5 424.2 245.8 426.2 248.8C428.3 251.7 430.6 255 433.8 257.5C436.9 260 440.8 262.3 445 263.8C449.2 265.2 454.2 266.1 458.8 266.2C463.3 266.4 468.1 265.6 472.5 264.4C476.9 263.1 481.2 261.1 485 258.8C488.8 256.4 492.1 253.1 495 250C497.9 246.9 500.4 243.1 502.5 240C504.6 236.9 506.7 232.7 507.5 231.2"/>
<path d="M485 261.2C486.2 260.3 491.2 256.6 492.5 255.6"/>
<path d="M443.8 246.2C444 244.6 444.4 243.4 446.2 242.5C448.1 241.6 451.7 240.8 455 240.6C458.3 240.4 463.5 240.5 466.2 241.2C469 242 470 243.3 471.2 245C472.5 246.7 474 249.9 473.8 251.2C473.5 252.6 472.3 253.1 470 253.1C467.7 253.1 463.3 251.5 460 251.2C456.7 251 452.5 251.7 450 251.9C447.5 252.1 446 253.4 445 252.5C444 251.6 443.5 247.9 443.8 246.2Z"/>
<path d="M430 255.6C428.8 257.2 425 261.4 422.5 265C420 268.6 417.6 273.2 415 277.5C412.4 281.8 408.2 288.4 406.9 290.6"/>
<path d="M441.9 265.6C441.6 267.4 440.5 273.4 440 276.2C439.5 279.1 438.5 281 438.8 282.5C439 284 440.8 284.6 441.2 285C442.3 284.2 445.5 281.2 447.5 280C449.5 278.8 451.2 277.5 453.1 277.5C455 277.5 456.8 279 458.8 280C460.7 281 464 282.9 465 283.5"/>
<path d="M452.5 266.9C453.8 267.8 457.7 270.1 460 272.5C462.3 274.9 464.4 278.6 466.2 281.2C468.1 283.9 470.5 286.2 471.2 288.1C472 290 470.9 290.8 470.6 292.5C470.4 294.2 469.9 297.2 469.8 298.1"/>
<path d="M448.8 281.2C448.6 282.7 447.7 286.5 448.1 290C448.5 293.5 449.9 298.1 451.2 302.5C452.6 306.9 454.6 311.8 456.2 316.2C457.9 320.7 460.4 327.2 461.2 329.4"/>
<path d="M485 261.9C484 263.2 480.5 267 478.8 270C477 273 475.6 276.9 474.4 280C473.1 283.1 471.8 287.3 471.2 288.8"/>
<path d="M397.5 313.8C396.6 315 392.8 320 391.9 321.2C391.7 320.2 390.4 317.5 390.6 315C390.8 312.5 392 309.4 393.1 306.2C394.3 303.1 395.2 298.9 397.5 296.2C399.8 293.6 404 291.6 406.9 290.6C409.8 289.7 411.8 289.9 415 290.6C418.2 291.4 422.7 293 426.2 295C429.8 297 433.4 299.8 436.2 302.5C439.1 305.2 441.5 308.3 443.1 311.2C444.8 314.2 445.8 317.1 446.2 320C446.7 322.9 446.2 326.5 445.6 328.8C445 331 443.9 332.4 442.5 333.8C441.1 335.1 439.3 336.2 437.5 336.9C435.7 337.5 432.8 337.4 431.9 337.5"/>
<path d="M391.9 321.2C392.6 320 394.3 315.5 396.2 313.8C398.2 312 400.8 311 403.8 310.6C406.7 310.2 410.6 310.3 413.8 311.2C416.9 312.2 420 314.2 422.5 316.2C425 318.3 427 321 428.8 323.8C430.5 326.5 432.5 330 433.1 332.5C433.8 335 432.6 337.7 432.5 338.8"/>
<path d="M445.6 316.2C446.8 315.6 451.4 313.1 452.5 312.5"/>
<path d="M391.9 321.2C390.7 323.8 387 331.9 385 336.2C383 340.6 381.2 344.3 380 347.5C378.8 350.7 377.9 354.3 377.5 355.6C376.2 355.9 372.3 356.8 370 357.5C367.7 358.2 365.4 359.1 363.8 360C362.1 360.9 360.6 362.6 360 363.1"/>
<path d="M431.9 337.5C430.7 339 427.2 343.1 425 346.2C422.8 349.4 420.8 353.4 418.8 356.2C416.7 359.1 414.6 360.8 412.5 363.1C410.4 365.4 407.3 368.9 406.2 370"/>
<path d="M410 370C411.5 368.8 415.8 364.2 418.8 362.5C421.7 360.8 425.2 360.9 427.5 360C429.8 359.1 430.8 358.1 432.5 356.9C434.2 355.6 436.7 353.2 437.5 352.5"/>
<path d="M473.1 319C471.1 320.8 465.5 326.5 461.2 330C457 333.5 451.7 336.5 447.5 340C443.3 343.5 438.8 348.5 436.2 351.2C433.8 354 433.1 355.4 432.5 356.2"/>
<path d="M511.2 345.6C509 347 501.9 351 497.5 353.8C493.1 356.5 489.6 359.2 485 361.9C480.4 364.6 472.5 368.6 470 370"/>
<path d="M472.5 318.8C472.8 317.1 473.1 311.9 474.4 308.8C475.6 305.6 477.4 302.3 480 300C482.6 297.7 486.7 295.7 490 295C493.3 294.3 496.5 294.8 500 295.6C503.5 296.5 507.7 297.9 511.2 300C514.8 302.1 518.5 305.2 521.2 308.1C524 311 525.9 314.5 527.5 317.5C529.1 320.5 530.2 324 530.6 326.2C531 328.5 530.9 329.4 530 331.2C529.1 333.1 527.1 335.4 525 337.5C522.9 339.6 519.8 342.4 517.5 343.8C515.2 345.1 512.3 345.3 511.2 345.6"/>
<path d="M473.1 319C474.1 318.1 476.8 314.8 478.8 313.8C480.7 312.7 482.7 312.1 485 312.5C487.3 312.9 490 314.8 492.5 316.2C495 317.7 497.7 319.2 500 321.2C502.3 323.3 504.6 326 506.2 328.8C507.9 331.5 509.2 334.7 510 337.5C510.8 340.3 511 344.3 511.2 345.6"/>
<path d="M490 295C491.2 292.5 495 284.8 497.5 280C500 275.2 502.9 270.2 505 266.2C507.1 262.3 508.5 259.6 510 256.2C511.5 252.9 512.5 249 513.8 246.2C515 243.5 516.2 241.9 517.5 240C518.8 238.1 520.6 235.8 521.2 235"/>
<path d="M498.8 277.5C500.2 275 504.6 266.7 507.5 262.5C510.4 258.3 513.1 255.2 516.2 252.5C519.4 249.8 522.9 247.7 526.2 246.2C529.6 244.8 533.5 244.1 536.2 243.8C539 243.4 540.2 243.3 542.5 244.4C544.8 245.4 547.9 248 550 250C552.1 252 553.9 254.5 555 256.2C556.1 258 556.6 259.9 556.9 260.6"/>
<path d="M525 232.2C526.7 232.6 532.2 233.6 535 234.4C537.8 235.1 538.9 234.7 541.6 236.9C544.3 239.1 548.8 243.9 551.2 247.5C553.7 251.1 554.8 254.6 556.2 258.8C557.7 262.9 558.5 267.3 560 272.5C561.5 277.7 563.6 283.8 565 290C566.4 296.2 567.3 303.8 568.1 310C569 316.2 569.5 321.5 570 327.5C570.5 333.5 570.6 340.8 571.2 346.2C571.9 351.7 573.4 356 573.8 360C574.1 364 573.2 368.3 573.1 370"/>
<path d="M549.4 298.1C548.4 299.7 545.7 304.5 543.8 307.5C541.8 310.5 539.7 313.4 537.5 316.2C535.3 319.1 531.8 323 530.6 324.4"/>
<path d="M525 218.8C527.8 219.3 536.1 219.4 541.6 221.9C547.2 224.3 554.5 230.4 558.4 233.4C562.3 236.4 562.6 237 565 240C567.4 243 570.2 246.7 572.5 251.2C574.8 255.8 577 261.5 578.8 267.5C580.5 273.5 582.1 281.7 583.1 287.5C584.2 293.3 584.6 297.9 585 302.5C585.4 307.1 585.8 311.7 585.6 315C585.4 318.3 584.9 319.8 583.8 322.5C582.6 325.2 581 328.9 578.8 331.2C576.5 333.6 573.1 335 570 336.9C566.9 338.8 563.8 340.6 560 342.5C556.2 344.4 551.7 346.7 547.5 348.1C543.3 349.6 539.2 350.5 535 351.2C530.8 352 526.7 352.4 522.5 352.5C518.3 352.6 513.8 351.9 510 351.9C506.2 351.9 501.7 352.4 500 352.5"/>
<path d="M583.8 289.4C585 289.4 588.5 289.3 591.2 289.4C594 289.5 598.5 289.9 600 290"/>
<path d="M580.6 330C582.2 330.3 586.8 331.4 590 331.9C593.2 332.4 598.3 332.9 600 333.1"/>
<path d="M485 363.8C487.1 364.3 492.3 366.1 497.5 366.9C502.7 367.6 510 368.2 516.2 368.1C522.5 368 528.8 367.5 535 366.2C541.2 365 548.5 362.7 553.8 360.6C559 358.5 563.3 355.4 566.2 353.8C569.2 352.1 570.4 351.1 571.2 350.6"/>
<path d="M494.4 356.9C494.4 358.3 494.7 364.2 494.8 365.6"/>
<path d="M511.9 354.4C512 356.6 512.6 365.3 512.8 367.5"/>
<path d="M536.9 353.1C537.2 355.2 538.4 363.5 538.8 365.6"/>
<path d="M546.2 351.9C546.7 353.5 548.3 360.2 548.8 361.9"/>
<path d="M488.8 358.8C489.7 358.4 493.4 357.2 494.4 356.9"/>
<path d="M345 275.6C347.5 275.8 354.4 276.1 360 276.5C365.6 276.9 372.5 277.4 378.8 278.1C385 278.8 392.2 279.9 397.5 280.6C402.8 281.4 408.4 282.2 410.6 282.5"/>
<path d="M360 295.6C363.1 295.7 372.7 295.7 378.8 296C384.8 296.3 393.3 297.2 396.2 297.5"/>
<path d="M54.1 365.9C53.1 367.4 51.2 369.8 48.4 375C45.7 380.2 40.6 389.8 37.5 396.9C34.4 403.9 31.6 410.4 29.7 417.2C27.7 424 26.6 431 25.8 437.5C25 444 24.5 450.3 25 456.2C25.5 462.2 27.1 468.2 28.9 473.4C30.7 478.6 33.2 483.3 35.9 487.5C38.7 491.7 42.2 495.1 45.3 498.4C48.4 501.8 52.1 505.5 54.7 507.8C57.3 510.2 59.9 511.7 60.9 512.5"/>
<path d="M68.8 350C68.1 352.1 65.9 358.1 64.8 362.5C63.8 366.9 62.5 372.1 62.5 376.6C62.5 381 63.3 384.9 64.8 389.1C66.4 393.2 69.7 397.1 71.9 401.6C74.1 406 76 411.3 78.1 415.6C80.2 419.9 83.3 425.4 84.4 427.3"/>
<path d="M115.6 365.9C116.3 368.2 118.2 374.8 119.5 379.7C120.8 384.6 122.5 391.7 123.4 395.3C124.3 399 124.7 400.5 125 401.6"/>
<path d="M37.5 400C39.1 401.6 42.7 406.2 46.9 409.4C51 412.5 56.5 415.6 62.5 418.8C68.5 421.9 79.4 426.6 82.8 428.1"/>
<path d="M31.2 417.2C33.3 419 38.5 424.7 43.8 428.1C49 431.5 55.6 434.6 62.5 437.5C69.4 440.4 81.4 444 85.2 445.3"/>
<path d="M25.8 440.6C27.5 442.4 31.4 448.2 35.9 451.6C40.5 454.9 47.1 458.6 53.1 460.9C59.1 463.3 65.6 464.5 71.9 465.6C78.1 466.7 85.7 467.4 90.6 467.5C95.6 467.6 98.8 467.4 101.6 466.4C104.3 465.4 106.2 463.2 107 461.7C107.8 460.3 106.4 458.5 106.2 457.8"/>
<path d="M84.4 427.3C85.7 425.4 89.3 419 92.2 415.6C95.1 412.2 97.9 409.1 101.6 407C105.2 404.9 110.2 404 114.1 403.1C118 402.2 121.9 400.8 125 401.6C128.1 402.3 130.7 405.5 132.8 407.8C134.9 410.2 136.6 413.4 137.5 415.6C138.4 417.8 138.2 420.2 138.3 421.1"/>
<path d="M84.4 427.3C84.1 428.8 82.3 432.7 82.8 435.9C83.3 439.2 85.4 444 87.5 446.9C89.6 449.7 92.2 451.6 95.3 453.1C98.4 454.7 104.4 455.7 106.2 456.2"/>
<path d="M107.8 455.5C107.3 454.8 105.5 453 104.7 451.6C103.9 450.1 102.6 449.2 103.1 446.9C103.6 444.5 105.5 440.6 107.8 437.5C110.2 434.4 113.8 430.7 117.2 428.1C120.6 425.5 125 423 128.1 421.9C131.2 420.7 134.2 421.1 135.9 421.1C137.6 421.1 137.9 421.7 138.3 421.9"/>
<path d="M136.7 421.9C138.7 423.7 143.6 428.1 148.4 432.8C153.3 437.5 162.8 447.1 165.6 450"/>
<path d="M107.8 456.2C110.7 457.8 118.5 462.5 125 465.6C131.5 468.8 143.2 473.4 146.9 475"/>
<path d="M165.6 451.6C167.7 452.1 173.7 453.1 178.1 454.7C182.6 456.2 188.5 458.6 192.2 460.9C195.8 463.3 198.2 466.1 200 468.8C201.8 471.4 202.6 474.5 202.8 476.6C203.1 478.6 201.8 480.5 201.6 481.2"/>
<path d="M146.9 469.5C147.1 471.7 147.3 478.5 148.4 482.8C149.6 487.1 151.6 491.9 153.9 495.3C156.2 498.7 159.5 501.4 162.5 503.1C165.5 504.8 169.5 505.2 171.9 505.5C174.2 505.7 175.8 504.8 176.6 504.7"/>
<path d="M160.2 490.6C160.5 491.9 161.5 496.2 162.5 498.4C163.5 500.7 165.8 503 166.4 503.9"/>
<path d="M171.1 489.8C171.7 491.3 173.3 495.8 175 498.4C176.7 501 179.2 504.2 181.2 505.5C183.3 506.8 185.8 506.6 187.5 506.2C189.2 505.9 191 504.7 191.4 503.1C191.8 501.6 190.6 498.7 189.8 496.9C189.1 495.1 187.2 493 186.7 492.2"/>
<path d="M120.3 365.6C121.1 368.4 124.2 379.3 125 382C126.6 381.2 131.1 378.7 134.4 377.3C137.6 376 142.8 374.3 144.5 373.8"/>
<path d="M135.2 378.1C135.7 379.7 137.1 384.1 138.3 387.5C139.5 390.9 141.5 396.6 142.2 398.4"/>
<path d="M148.4 379.4C147.8 381 145.6 385.9 144.5 389.1C143.5 392.2 142.6 396.9 142.2 398.4C143.5 397.1 147.4 393.1 150 390.6C152.6 388.2 156 385 157.8 383.6C159.6 382.2 160.4 382.3 160.9 382C162.1 383.2 166.8 387.9 168 389.1C168.6 387.8 170.8 383.9 171.9 381.2C172.9 378.6 173.8 374.7 174.2 373.4"/>
<path d="M145.8 361.4C146.1 362.9 147.2 367.3 147.7 370.3C148.1 373.3 148.3 377.9 148.4 379.4"/>
<path d="M153.9 370.3C153.3 371.4 151 375 150 376.6C149 378.1 148 379.2 147.7 379.7"/>
<path d="M150 365.9C151.3 366.5 155.2 368.3 157.8 369.1C160.4 369.8 162.5 370.3 165.6 370.6C168.8 371 172.9 371.7 176.6 371.1C180.2 370.5 185.7 367.8 187.5 367.2"/>
<path d="M193.8 365.6C194.7 368.2 197.7 375.5 199.2 381.2C200.8 387 202.1 394 203.1 400C204.2 406 205.1 414.3 205.5 417.2"/>
<path d="M185.9 368.8C185.4 370.8 184.4 376.6 182.8 381.2C181.2 385.9 178.9 391.9 176.6 396.9C174.2 401.8 171.1 407.3 168.8 410.9C166.4 414.6 165.4 414.8 162.5 418.8C159.6 422.7 153.4 431.8 151.6 434.4"/>
<path d="M138.3 418.8C140.2 419 146 420.4 150 420.3C154 420.2 160.4 418.4 162.5 418"/>
<path d="M137.5 410.2C138.3 408.5 141.4 401.7 142.2 400"/>
<path d="M159.4 425C159.9 426.3 161.3 430.7 162.5 432.8C163.7 434.9 165.8 434.6 166.4 437.5C167.1 440.4 166.4 447.9 166.4 450"/>
<path d="M166.4 435.9C167.6 434.6 170.4 430.6 173.4 428.1C176.4 425.7 180.5 422.8 184.4 421.1C188.3 419.4 193.2 418.6 196.9 418C200.5 417.3 203.8 416.5 206.2 417.2C208.7 417.8 211.5 419.3 211.7 421.9C212 424.5 209.2 429.2 207.8 432.8C206.4 436.5 204.9 439.3 203.1 443.8C201.3 448.2 197.9 456.8 196.9 459.4"/>
<path d="M182 453.1C182.9 452 185 448.3 187.5 446.1C190 443.9 193.5 441.5 196.9 439.8C200.3 438.2 206 436.6 207.8 435.9"/>
<path d="M223.4 403.9C222.1 406.4 218.2 413.2 215.6 418.8C213 424.3 210.9 430.7 207.8 437.5C204.7 444.3 198.7 455.7 196.9 459.4"/>
<path d="M256.2 412.5C255.7 414.6 254.7 420.1 253.1 425C251.6 429.9 249.2 436.2 246.9 442.2C244.5 448.2 241.1 455.7 239.1 460.9C237 466.1 235.9 470.3 234.4 473.4C232.8 476.6 230.5 478.6 229.7 479.7"/>
<path d="M225 403.9C225.8 404.9 227.3 408.5 229.7 410.2C232 411.8 235.9 413.2 239.1 414.1C242.2 415 245.8 415.9 248.4 415.6C251 415.4 253.4 413.5 254.7 412.5C256 411.5 256 409.9 256.2 409.4"/>
<path d="M231.2 365.9C230.5 367.4 227.6 371.7 226.6 375C225.5 378.3 224.7 382.6 225 385.9C225.3 389.3 228.1 392.4 228.1 395.3C228.1 398.2 225.5 401.8 225 403.1"/>
<path d="M281.2 365.9C279.4 368.8 272.1 380 270.3 382.8C271.9 382.7 276.6 382 279.7 382C282.8 382 286.7 381.9 289.1 382.8C291.4 383.7 293.5 385.9 293.8 387.5C294 389.1 292.7 391 290.6 392.2C288.5 393.4 284.4 393.5 281.2 394.5C278.1 395.6 274.5 396.7 271.9 398.4C269.3 400.1 268.2 403.4 265.6 404.7C263 406 258.1 404.9 256.2 406.2C254.4 407.6 254.9 411.5 254.7 412.5"/>
<path d="M239.1 464.8C241.4 466.5 247.7 471.5 253.1 475C258.6 478.5 270.3 482.8 271.9 485.9C273.4 489.1 265.4 490.9 262.5 493.8C259.6 496.6 256.8 500 254.7 503.1C252.6 506.2 250.8 510.9 250 512.5"/>
<path d="M91.4 475C92.8 476.8 97.3 482 100 485.9C102.7 489.8 105.7 494 107.8 498.4C109.9 502.9 111.7 510.2 112.5 512.5"/>
<path d="M96.9 480.5C99 479.3 107.3 474.6 109.4 473.4"/>
<path d="M103.1 488.3C104.7 489.5 108.9 492.8 112.5 495.3C116.1 497.8 120.1 500.7 125 503.1C129.9 505.6 139.3 509 142.2 510.2"/>
<path d="M129.7 507C129.4 507.9 128.4 511.6 128.1 512.5"/>
<path d="M178.1 506.2C177.9 507.3 176.8 511.5 176.6 512.5"/>
<path d="M360 363.1C361.5 362.2 366 359 368.8 357.8C371.5 356.7 374.5 357.6 376.6 356.2C378.6 354.9 380.5 351 381.2 350"/>
<path d="M406.2 370C405.5 370.8 402.6 373.1 401.6 375C400.5 376.9 400.8 379.4 400 381.2C399.2 383.1 398.4 384.6 396.9 385.9C395.3 387.2 391.7 388.5 390.6 389.1"/>
<path d="M410 370C409.6 370.1 408.7 369.2 407.8 370.3C406.9 371.4 405.1 374.3 404.7 376.6C404.3 378.8 404.7 381.8 405.5 383.6C406.2 385.4 407.7 387 409.4 387.5C411.1 388 414 387.9 415.6 386.7C417.2 385.5 418.5 381.5 419.1 380.5"/>
<path d="M415.6 387.5C415.1 389.1 413.3 393.5 412.5 396.9C411.7 400.3 410.8 404.7 410.6 407.8C410.5 410.9 410.8 414.1 411.7 415.6C412.7 417.2 414.8 417.7 416.4 417.2C418 416.7 419.5 414.8 421.1 412.5C422.7 410.2 424 406.7 425.8 403.1C427.6 399.5 431 393 432 390.9"/>
<path d="M421.1 415.6C422 415.5 424.6 416.3 426.6 414.8C428.5 413.4 430.6 410.4 432.8 407C435 403.6 438.7 396.6 439.8 394.5"/>
<path d="M432.8 415.6C433.7 415 436.5 413.8 438.3 411.7C440.1 409.6 441.8 406.5 443.8 403.1C445.7 399.7 448.2 395.3 450 391.4C451.8 387.5 451.6 382.7 454.7 379.7C457.8 376.7 463.8 375.9 468.8 373.4C473.7 371 481.8 366.3 484.4 364.8"/>
<path d="M470 370C468.8 370.8 465.1 373.4 462.5 375C459.9 376.6 456 378.9 454.7 379.7"/>
<path d="M573.1 370C572.9 371.9 572.9 376.8 571.9 381.2C570.9 385.7 569.3 391.7 567.2 396.9C565.1 402.1 562.5 407.6 559.4 412.5C556.2 417.4 550.3 424.2 548.4 426.6C549.7 428.9 553.6 435.4 556.2 440.6C558.9 445.8 562 452.1 564.1 457.8C566.1 463.5 567.1 470.5 568.8 475C570.4 479.5 573.3 483.3 574.2 485"/>
<path d="M453.9 379.7C452.7 382.6 448.8 391.4 446.9 396.9C444.9 402.3 443.2 407.3 442.2 412.5C441.1 417.7 440.6 423.4 440.6 428.1C440.6 432.8 441.9 438.5 442.2 440.6"/>
<path d="M492.2 383.6C493.8 384.5 498.8 387.4 501.6 389.1C504.3 390.8 507.4 393 508.6 393.8C509.2 392.4 511.8 387.2 512.5 385.9"/>
<path d="M508.6 393.8C506.6 396.1 501 402.9 496.9 407.8C492.7 412.8 485.4 418.2 483.6 423.4C481.8 428.6 485.3 434.1 485.9 439.1C486.6 444 486.8 448.2 487.5 453.1C488.2 458.1 489.5 466.1 489.8 468.8"/>
<path d="M508.6 393.8C507.7 396.9 504.4 406.2 503.1 412.5C501.8 418.8 500.5 425.5 500.8 431.2C501 437 502.5 441.1 504.7 446.9C506.9 452.6 511.2 460.2 514.1 465.6C516.9 471.1 520.1 476.3 521.9 479.7C523.7 483.1 524.5 484.9 525 485.9"/>
<path d="M442.2 440.6C444.5 441.3 451.3 444 456.2 444.5C461.2 445.1 466.9 444.5 471.9 443.8C476.8 443 483.6 440.5 485.9 439.8"/>
<path d="M442.2 441.4C442.3 443.9 442.6 452.2 443 456.2C443.4 460.3 445.7 463.3 444.5 465.6C443.4 468 438.9 468.8 435.9 470.3C432.9 471.9 428.9 473.2 426.6 475C424.2 476.8 422.1 479.2 421.9 481.2C421.6 483.3 422.9 486.1 425 487.5C427.1 488.9 430.5 489.5 434.4 489.8C438.3 490.2 443.8 490.5 448.4 489.8C453.1 489.2 458.1 487.4 462.5 485.9C466.9 484.5 471.1 482.7 475 481.2C478.9 479.8 483.2 478.9 485.9 477.3C488.7 475.8 490.8 473.4 491.4 471.9C492.1 470.3 490.1 468.6 489.8 468"/>
<path d="M444.5 465.6C445.4 466 448.3 466.8 450 468C451.7 469.1 453.9 471.9 454.7 472.7"/>
<path d="M515.6 468C517.4 468.6 522.7 471.1 526.6 471.9C530.5 472.7 534.9 473.2 539.1 472.7C543.2 472.1 548.2 470.2 551.6 468.8C554.9 467.3 557.4 465.8 559.4 464.1C561.3 462.4 562.6 459.5 563.3 458.6"/>
<path d="M524.5 485.8C523 486.9 518.3 490.2 515.5 492.7C512.7 495.1 509.3 498.3 507.7 500.5C506 502.7 505.3 504.1 505.8 505.8C506.3 507.4 507.9 509.5 510.8 510.5C513.6 511.5 518.4 511.9 523 511.9C527.6 511.9 533.3 511.9 538.4 510.5C543.6 509.1 549.4 505.1 553.8 503.4C558.1 501.8 561.4 501.6 564.5 500.5C567.6 499.3 570.4 498 572.3 496.6C574.3 495.1 575.8 493.8 576.1 491.9C576.4 489.9 574.5 486.1 574.2 485"/>
<path d="M525 485.9C526.3 486.1 530.3 486.1 532.8 486.7C535.3 487.4 538.7 489.3 539.8 489.8"/>
<path d="M440.6 460.2C438.8 460.3 433.6 460.3 429.7 460.9C425.8 461.6 420.8 462.8 417.2 464.1C413.5 465.4 410.3 466.9 407.8 468.8C405.3 470.6 403.5 472.7 402.3 475C401.2 477.3 401.2 480.3 400.8 482.8C400.4 485.3 400.1 488.7 400 489.8"/>
<path d="M401.6 489.1C402.9 490.1 406 493.5 409.4 495.3C412.8 497.1 417.2 498.8 421.9 500C426.6 501.2 432.3 502 437.5 502.3C442.7 502.7 448.7 502.4 453.1 502.3C457.6 502.3 462.2 502 464.1 501.9C461.7 502.2 453.9 502.9 450 503.9C446.1 504.9 442.4 506.4 440.6 507.8C438.8 509.2 439.3 511.7 439.1 512.5"/>
<path d="M492.2 466.4C494 466.3 499.5 465.5 503.1 465.6C506.8 465.8 512.2 466.9 514.1 467.2"/>
<path d="M564.1 462.5C565.9 462.1 571.1 460.2 575 459.8C578.9 459.5 583.2 459.8 587.5 460.3C591.8 460.8 598.6 462.4 600.8 462.8"/>
<path d="M600.8 499.2C599.4 500.3 595.8 503.9 592.3 505.8C588.9 507.6 584.6 509.2 580 510.3C575.4 511.5 567.1 512.3 564.5 512.7"/>
<path d="M340.6 512.5C342.2 511.8 348.4 509.2 350 508.6"/>
<path d="M357.8 498.4C358.6 499.7 361.5 503.9 362.5 506.2C363.5 508.6 363.8 511.5 364.1 512.5"/>
<path d="M362.5 502.3C364.6 503.1 370.8 505.3 375 507C379.2 508.7 385.4 511.6 387.5 512.5"/>
<path d="M57.8 512C58.9 512.6 63 514.9 64.1 515.4"/>
<path d="M53.9 512C52.7 514.1 49.2 519.8 46.9 524.5C44.5 529.2 42.1 535.3 39.8 540.1C37.6 544.9 34.4 550.3 33.6 553.4C32.8 556.5 33.5 556.9 35.2 558.9C36.8 560.8 40.2 563.4 43.8 565.1C47.3 566.8 52.1 568.4 56.2 569C60.4 569.7 65.1 569.6 68.8 569C72.4 568.5 75.3 567.3 78.1 565.9C81 564.5 84 562.1 85.9 560.4C87.9 558.7 89.2 556.5 89.8 555.8"/>
<path d="M111.7 511.2C111.7 512.4 112.4 515.5 111.7 518.2C111.1 521 109.8 524.2 107.8 527.6C105.9 531 102.3 534.7 100 538.6C97.7 542.5 95.7 547.7 93.8 551.1C91.8 554.4 89.2 557.6 88.3 558.9"/>
<path d="M33.6 561.2C32.9 562.9 31.1 568.1 29.7 571.4C28.3 574.6 25.8 578.1 25 580.8C24.2 583.4 24 584.9 25 587C26 589.1 28.9 591.6 31.2 593.2C33.6 594.9 35.7 595.6 39.1 597.2C42.4 598.7 47.1 601.2 51.6 602.6C56 604 60.7 605 65.6 605.4C70.6 605.8 76.6 605.6 81.2 605C85.9 604.4 90.6 603.1 93.8 601.8C96.9 600.5 98.7 599.1 100 597.2C101.3 595.2 101.8 592.3 101.6 590.1C101.3 587.9 100 585.8 98.4 583.9C96.9 581.9 94.8 580 92.2 578.4C89.6 576.8 84.4 575.2 82.8 574.5"/>
<path d="M39.1 595.6C40.2 595.2 44.9 593.6 46.1 593.2"/>
<path d="M57.8 579.5C59.6 578.9 65.4 576.9 68.8 576.1C72.1 575.2 75.5 574.6 78.1 574.5C80.7 574.4 83.3 575.2 84.4 575.3"/>
<path d="M76.6 569C77.6 570.1 81.8 574.2 82.8 575.3"/>
<path d="M33.6 561.7C31.9 562.4 26.3 564 23.4 565.9C20.6 567.8 18 570.5 16.4 572.9C14.8 575.4 13.9 577.9 14.1 580.8C14.2 583.6 15.1 587.1 17.2 590.1C19.3 593.1 22.7 596.2 26.6 598.7C30.5 601.2 35.2 603.3 40.6 605C46.1 606.7 53.1 608.1 59.4 608.9C65.6 609.7 72.4 609.9 78.1 609.7C83.9 609.4 89.6 608.5 93.8 607.3C97.9 606.1 100.9 604.4 103.1 602.6C105.3 600.8 106.2 598.5 107 596.4C107.8 594.3 106.9 591.7 107.8 590.1C108.7 588.6 109.9 588 112.5 587C115.1 586 119.3 584.4 123.4 584.2C127.6 583.9 132.6 584.8 137.5 585.4C142.4 586 147.9 587.5 153.1 587.8C158.3 588 164.3 587.7 168.8 587C173.2 586.3 177.9 584.4 179.7 583.9"/>
<path d="M128.1 511.2C127.3 513.2 125 519.2 123.4 522.9C121.9 526.7 119.9 530.8 118.8 533.9C117.6 537 116.1 539.6 116.4 541.7C116.7 543.8 118.1 544.9 120.3 546.4C122.5 547.8 126.3 549.4 129.7 550.3C133.1 551.2 137.2 551.8 140.6 551.8C144 551.9 147 551.3 150 550.8C153 550.2 157.2 549.1 158.6 548.7"/>
<path d="M177.3 511.2C176.7 513.2 175.1 518.9 173.4 522.9C171.7 527 169.7 531.1 167.2 535.4C164.7 539.7 160 546.5 158.6 548.7"/>
<path d="M118 547.9C117.4 549.5 115.6 554.4 114.8 557.3C114.1 560.2 113 562.7 113.3 565.1C113.5 567.6 114.7 570.3 116.4 572.2C118.1 574 121.2 575.3 123.4 576.1C125.7 576.8 127.9 577 129.7 576.8C131.5 576.7 132.6 574.9 134.4 575.3C136.2 575.7 137.5 577.9 140.6 579.2C143.8 580.5 149 582.3 153.1 583.1C157.3 583.9 161.7 584 165.6 583.9C169.5 583.7 173.6 583.4 176.6 582.3C179.6 581.3 181.9 579.4 183.6 577.6C185.3 575.8 186.6 573.7 186.7 571.4C186.8 569 185.8 565.8 184.4 563.6C182.9 561.3 180.6 559.5 178.1 558.1C175.7 556.7 171.9 555.8 169.5 555C167.2 554.2 165.9 554.4 164.1 553.4C162.2 552.4 159.5 549.5 158.6 548.7"/>
<path d="M143.8 560.4C145.3 559.8 150 557.4 153.1 556.5C156.2 555.6 160.9 555.2 162.5 555"/>
<path d="M180.5 581.5C180.1 582.1 179.6 583.9 178.1 584.7C176.7 585.4 172.9 586 171.9 586.2"/>
<path d="M88.3 558.9C89.7 559.1 93.9 560.2 96.9 560.4C99.9 560.6 103.5 559.9 106.2 560.1C109 560.3 112.1 561.4 113.3 561.7"/>
<path d="M46.9 608.1C45.8 609.8 42.3 614.7 40.6 618.2C38.9 621.8 37.2 626.2 36.7 629.2C36.2 632.2 38.3 635 37.5 636.2C36.7 637.4 33.7 635.6 32 636.2C30.3 636.9 27.9 638.3 27.3 640.1C26.8 641.9 27.9 645.5 28.9 647.2C29.9 648.8 31.9 650.2 33.6 650.3C35.3 650.4 37.9 648.7 39.1 647.9C40.2 647.2 39.7 645.5 40.6 645.6C41.5 645.7 43 648.3 44.5 648.7C46.1 649.1 48.3 648.7 50 647.9C51.7 647.2 54 645.5 54.7 644C55.3 642.6 54.9 640.5 53.9 639.3C52.9 638.2 49.2 638.7 48.4 637C47.7 635.3 48.2 632.1 49.2 629.2C50.3 626.3 53 622.4 54.7 619.8C56.4 617.2 57.8 615.3 59.4 613.6C60.9 611.9 63.3 610.3 64.1 609.7"/>
<path d="M179.7 583.9C181.2 582.3 187.1 577.6 189.1 574.5C191 571.4 190.5 567.7 191.4 565.1C192.3 562.5 193.1 560.3 194.5 558.9C196 557.4 199.3 557.6 200 556.5C200.7 555.5 200 553.7 198.4 552.6C196.9 551.6 193 551.2 190.6 550.3C188.3 549.4 185.3 548.5 184.4 547.2C183.5 545.9 183.3 543.9 185.2 542.5C187 541 191 539.6 195.3 538.6C199.6 537.5 205.7 536.9 210.9 536.2C216.1 535.6 221.9 535 226.6 534.7C231.2 534.3 236.5 533.7 239.1 533.9C241.7 534 241.7 535.2 242.2 535.4"/>
<path d="M179.7 584.2C180.5 584.9 184.4 587.1 184.4 588.6C184.4 590.1 181.1 591.4 179.7 593.2C178.3 595.1 176.3 597.4 175.8 599.5C175.3 601.6 175.5 603.7 176.6 605.8C177.6 607.8 181.5 610.3 182 612C182.6 613.7 181.6 615 179.7 615.9C177.7 616.8 173.2 617.6 170.3 617.5C167.4 617.3 164.8 616.6 162.5 615.1C160.2 613.7 158.6 611.2 156.2 608.9C153.9 606.5 151.3 603.1 148.4 601.1C145.6 599 141.9 597.3 139.1 596.4C136.2 595.5 133.9 595.1 131.2 595.6C128.6 596.1 126 597.3 123.4 599.5C120.8 601.7 117.5 605.5 115.6 608.9C113.8 612.3 112.4 616.4 112.2 619.8C111.9 623.2 112.2 625.8 114.1 629.2C115.9 632.6 119.8 636.5 123.4 640.1C127.1 643.8 131.8 648.2 135.9 651.1C140.1 653.9 144 655.9 148.4 657.3C152.9 658.7 159.1 658.7 162.5 659.7C165.9 660.6 168 661.6 168.8 662.8C169.5 664 168.5 665.8 167.2 666.7C165.9 667.6 162.2 666.9 160.9 668.2C159.6 669.6 159.6 673.5 159.4 674.5"/>
<path d="M214.1 550.3C214.1 549.5 216.4 548.9 218.8 548.7C221.1 548.5 224.9 549.3 228.1 549.2C231.4 549.1 236.7 547.9 238.3 548.2C239.8 548.6 239.2 550.3 237.5 551.1C235.8 551.8 231.2 552.5 228.1 552.9C225 553.3 221.1 553.8 218.8 553.4C216.4 553 214.1 551.1 214.1 550.3Z"/>
<path d="M207 574.5C206.2 573.3 206.6 568.5 207.8 566.7C209 564.9 211.8 563.8 214.1 563.6C216.3 563.3 220.3 564.1 221.1 565.1C221.9 566.2 220.2 568.4 218.8 569.8C217.3 571.2 214.5 572.9 212.5 573.7C210.5 574.5 207.8 575.7 207 574.5Z"/>
<path d="M216.4 585.4C215.6 585.4 212 588 210.9 590.1C209.9 592.2 209.5 595.3 210.2 597.9C210.8 600.5 212.6 603.4 214.8 605.8C217.1 608.1 220.3 610.6 223.4 612C226.6 613.4 232 614.5 233.6 614.3C235.2 614.2 234.5 612.7 232.8 611.2C231.1 609.8 226 608 223.4 605.8C220.8 603.5 218.5 600.5 217.2 597.9C215.9 595.3 215.8 592.2 215.6 590.1C215.5 588 217.2 585.4 216.4 585.4Z"/>
<path d="M146.9 632.3C148.3 631.7 153.1 632.7 156.2 632.3C159.4 631.9 162.8 630.5 165.6 630C168.5 629.4 172.4 628.7 173.4 629.2C174.5 629.7 173.4 631.8 171.9 633.1C170.3 634.4 167.2 636.1 164.1 637C160.9 637.9 155.9 638.7 153.1 638.6C150.4 638.4 148.7 637.3 147.7 636.2C146.6 635.2 145.4 633 146.9 632.3Z"/>
<path d="M176.6 640.9C176.7 640 179.4 640.1 181.2 640.1C183.1 640.1 186.3 640.1 187.5 640.9C188.7 641.7 188.8 643.6 188.3 644.8C187.8 646 185.7 647.8 184.4 647.9C183.1 648.1 181.8 646.8 180.5 645.6C179.2 644.4 176.4 641.8 176.6 640.9Z"/>
<path d="M207.8 628.4C208.6 627.5 211.2 626.3 214.1 626.1C216.9 625.8 222.5 626.3 225 626.8C227.5 627.4 229.4 628.5 228.9 629.2C228.4 629.8 224.1 630.1 221.9 630.8C219.7 631.4 217.7 633 215.6 633.1C213.5 633.2 210.7 632.3 209.4 631.5C208.1 630.8 207 629.3 207.8 628.4Z"/>
<path d="M204.7 646.4C206 645.3 209 645.1 212.5 644.8C216 644.6 224.7 644.3 225.8 644.8C226.8 645.3 221.5 647.2 218.8 647.9C216 648.7 211.7 649 209.4 649.5C207 650 205.5 651.6 204.7 651.1C203.9 650.5 203.4 647.4 204.7 646.4Z"/>
<path d="M242.2 535.4C241.4 538.3 239.1 546.6 237.5 552.6C235.9 558.6 234.2 565.1 232.8 571.4C231.4 577.6 229.4 586.2 228.9 590.1C228.4 594 229.6 594 229.7 594.8"/>
<path d="M362.5 511.2C363 512.9 364.8 517.9 365.6 521.4C366.4 524.9 367.4 529.4 367.2 532.3C366.9 535.2 366.4 536.7 364.1 538.6C361.7 540.4 354.9 542.5 353.1 543.2C354.4 544.9 359.6 551.7 360.9 553.4C359.6 555.9 356.2 562.9 353.1 568.2C350 573.6 344 582.6 342.2 585.4"/>
<path d="M384.4 511.2C386.5 512.4 392.2 515 396.9 518.2C401.6 521.5 407.6 526.6 412.5 530.8C417.4 534.9 422.4 539.1 426.6 543.2C430.7 547.4 434.4 551.6 437.5 555.8C440.6 559.9 443.4 564.1 445.3 568.2C447.3 572.4 449 576.6 449.2 580.8C449.5 584.9 448.3 588.6 446.9 593.2C445.4 597.9 443.2 603.9 440.6 608.9C438 613.8 434.6 618.9 431.2 622.9C427.9 627 422.1 631.4 420.3 633.1"/>
<path d="M393 519.8C391.5 520.3 386.7 521.1 384.4 522.9C382 524.8 380.3 527.4 378.9 530.8C377.5 534.1 376.5 539.3 375.8 543.2C375.1 547.2 374.9 552.4 374.7 554.2"/>
<path d="M406.2 576.1C407.3 575.2 410.2 572.3 412.5 570.6C414.8 568.9 419 566.7 420.3 565.9"/>
<path d="M407.8 577.6C409.1 576.8 413 574 415.6 572.9C418.2 571.8 421.1 571.2 423.4 571.1C425.8 570.9 428.6 572 429.7 572.2"/>
<path d="M378.9 565.1C381.1 566.6 387.5 570.7 392.2 573.7C396.9 576.7 404.6 581.5 407 583.1"/>
<path d="M381.2 569C380.5 572 378 581.1 376.6 587C375.1 592.9 373.3 601.3 372.7 604.2"/>
<path d="M407 583.1C405.6 584.3 400.8 587.8 398.4 590.1C396.1 592.5 394.1 595.1 393 597.2C391.8 599.2 391.7 601.7 391.4 602.6"/>
<path d="M372.7 605C374.1 604.6 378.5 602.9 381.2 602.6C384 602.4 386.8 602.9 389.1 603.4C391.3 603.9 393.6 605.4 394.5 605.8"/>
<path d="M393.8 603.4C395.3 603.5 400.3 603.3 403.1 604.2C406 605.1 408.7 606.9 410.9 608.9C413.2 610.8 415 613.3 416.4 615.9C417.8 618.5 418.9 621.8 419.5 624.5C420.2 627.2 420.2 631 420.3 632.3"/>
<path d="M367.2 612C366.5 613.3 364.2 617.2 363.3 619.8C362.4 622.4 361.6 625.3 361.7 627.6C361.8 630 362.9 632.6 364.1 633.9C365.2 635.2 367.6 636 368.8 635.4C369.9 634.9 370.1 632.8 371.1 630.8C372.1 628.7 373.3 625.5 375 622.9C376.7 620.3 380.2 616.4 381.2 615.1"/>
<path d="M371.1 632.3C371.5 633.4 372.3 637 373.4 638.6C374.6 640.1 376.6 641.9 378.1 641.7C379.7 641.4 381.2 638.8 382.8 637C384.4 635.2 385.7 632.7 387.5 630.8C389.3 628.8 392.7 626.2 393.8 625.3"/>
<path d="M379.7 641.7C380.5 642.6 382.6 646.1 384.4 647.2C386.2 648.2 388.8 648.6 390.6 647.9C392.4 647.3 393.8 645.1 395.3 643.2C396.9 641.4 398.3 638.6 400 637C401.7 635.4 404.6 634.4 405.5 633.9"/>
<path d="M393.8 648.7C395.1 648.1 399 646.4 401.6 644.8C404.2 643.2 406.2 641.4 409.4 639.3C412.5 637.3 418.5 633.5 420.3 632.3"/>
<path d="M363.3 619.8C363 619.3 362.8 617.6 361.7 616.7C360.7 615.8 358.5 614.5 357 614.3C355.6 614.2 354 615 353.1 615.9C352.2 616.8 351.7 618.1 351.6 619.8C351.4 621.5 351.6 624 352.3 626.1C353.1 628.1 354.6 630.5 356.2 632.3C357.9 634.1 360.2 635.9 362.5 637C364.8 638.1 369 638.6 370.3 638.9"/>
<path d="M409.4 640.1C410.9 641.2 416.4 644.4 418.8 646.4C421.1 648.3 423.2 650.3 423.4 651.8C423.7 653.4 422.1 655 420.3 655.8C418.5 656.5 415.4 657.1 412.5 656.5C409.6 656 406.2 653.9 403.1 652.6C400 651.3 395.3 649.4 393.8 648.7"/>
<path d="M436.7 551.1C438.4 551.3 443.4 551.7 446.9 552.6C450.4 553.5 454.4 554.7 457.8 556.5C461.2 558.4 465 561.1 467.2 563.6C469.4 566 470.8 568.8 471.1 571.4C471.4 574 470.1 576.6 468.8 579.2C467.4 581.8 463.8 585.2 463.3 587C462.8 588.8 463.7 589.2 465.6 590.1C467.6 591 472.1 591.2 475 592.5C477.9 593.8 480.7 595.5 482.8 597.9C484.9 600.4 486.8 603.9 487.5 607.3C488.2 610.7 487.8 614.9 486.7 618.2C485.7 621.6 483.7 625.2 481.2 627.6C478.8 630.1 475.3 631.8 471.9 633.1C468.5 634.4 463.9 634.8 460.9 635.4C457.9 636.1 455.1 636.7 453.9 637"/>
<path d="M450.8 636.7C451.7 637.5 454.7 639.6 456.2 641.7C457.8 643.8 459.9 646.9 460.2 649.5C460.4 652.1 459.5 655.2 457.8 657.3C456.1 659.4 453.4 660.4 450 662C446.6 663.6 442.2 665.4 437.5 666.7C432.8 668 427.1 668.8 421.9 669.8C416.7 670.9 408.9 672.4 406.2 672.9"/>
<path d="M462.5 604.2C463.4 604.6 466.8 605.2 468 606.5C469.1 607.8 469.9 609.8 469.5 612C469.1 614.2 467.6 617.5 465.6 619.8C463.7 622.2 460.9 624.5 457.8 626.1C454.7 627.6 449.5 627.9 446.9 629.2C444.3 630.5 443 633.1 442.2 633.9C442.1 633.6 440.9 633.9 441.4 632.3C441.9 630.8 443.1 626.6 445.3 624.5C447.5 622.4 452.1 621.6 454.7 619.8C457.3 618 459.6 616.2 460.9 613.6C462.2 611 462.2 605.8 462.5 604.2"/>
<path d="M429.7 646.4C430.6 646.6 434 646.8 435.2 647.9C436.3 649.1 437.1 651.3 436.7 653.4C436.3 655.5 434.8 658.6 432.8 660.4C430.9 662.3 427 663.8 425 664.3C423 664.9 421.1 664.6 421.1 663.6C421.1 662.5 423.4 659.9 425 658.1C426.6 656.3 429.7 654.6 430.5 652.6C431.2 650.7 429.8 647.4 429.7 646.4"/>
<path d="M439.8 512.8C441.5 513.2 445.7 514.8 450 515.1C454.3 515.5 459.9 514.7 465.6 514.8C471.4 514.9 478.1 515.3 484.4 515.9C490.6 516.5 498.3 517.3 503.1 518.2C507.9 519.2 511.6 520.9 513.3 521.4C515.2 521 519.9 520.1 525 519C530.1 518 537 516.1 543.8 515.1C550.5 514.2 559.4 513.8 565.6 513.2C571.9 512.7 578.6 512.2 581.2 512"/>
<path d="M513.3 522.2C511.6 522.1 506.9 521.3 503.1 521.7C499.3 522.1 494.3 523 490.6 524.5C487 526 483.7 528.1 481.2 530.8C478.8 533.4 476.4 537.3 475.8 540.1C475.1 543 475.8 545.9 477.3 547.9C478.9 550 483.6 552 485.2 552.6C486.7 553.3 485.9 551.5 486.7 551.8C487.5 552.2 488.5 554.3 489.8 555C491.1 555.6 493.3 556 494.5 555.8C495.8 555.5 497.1 555 497.2 553.4C497.3 551.8 495.1 548.5 495.3 546.4C495.5 544.3 496.6 542.3 498.4 540.9C500.3 539.5 503.4 538.6 506.2 537.8C509.1 537 513.4 537.3 515.6 536.2C517.8 535.2 519.3 533.2 519.5 531.5C519.8 529.8 518.2 527.6 517.2 526.1C516.1 524.5 513.9 522.8 513.3 522.2"/>
<path d="M489.1 637C488.9 635 489.6 632.4 491.4 630.8C493.2 629.1 496 627.4 500 626.8C504 626.3 511.2 628.4 515.6 627.6C520.1 626.8 522.9 623.9 526.6 622.2C530.2 620.4 534.1 617.7 537.5 617C540.9 616.3 543.5 617 546.9 618.2C550.3 619.5 554.2 622.9 557.8 624.5C561.5 626.1 565.8 626.3 568.8 627.6C571.7 628.9 574.7 630.5 575.8 632.3C576.8 634.1 576.4 637 575 638.6C573.6 640.1 569.8 640.4 567.2 641.7C564.6 643 563.3 645.9 559.4 646.4C555.5 646.9 549.2 645.7 543.8 644.8C538.3 643.9 531.5 641.4 526.6 640.9C521.6 640.4 518.2 641 514.1 641.7C509.9 642.3 505.2 644.7 501.6 644.8C497.9 644.9 494.3 643.8 492.2 642.5C490.1 641.2 489.2 639 489.1 637Z"/>
<path d="M559.4 674.5C562 673.1 570.1 668 575 665.9C579.9 663.8 584.8 662.9 589.1 662C593.4 661.1 598.8 660.7 600.8 660.4"/>
<path d="M328.9 635.4C329.2 634.7 331.2 632.8 332.8 632.3C334.4 631.8 337.6 631.8 338.3 632.3C338.9 632.8 337.9 634.7 336.7 635.4C335.5 636.2 332.6 637 331.2 637C329.9 637 328.6 636.2 328.9 635.4Z"/>
<path d="M343 647.9C343.9 646.6 345.6 644.8 346.9 644.8C348.2 644.8 350.3 646.4 350.8 647.9C351.3 649.5 351.2 652.1 350 654.2C348.8 656.3 346.4 658.7 343.8 660.4C341.1 662.1 337.2 663.7 334.4 664.3C331.5 665 326.3 665.3 326.6 664.3C326.8 663.4 333.5 660.8 335.9 658.9C338.4 656.9 340.2 654.4 341.4 652.6C342.6 650.8 342.1 649.2 343 647.9Z"/>
<path d="M368.8 657.3C370.3 657.3 374.5 659.5 378.1 660.4C381.8 661.3 386.8 662.6 390.6 662.8C394.4 663 399.7 661.2 400.8 661.7C401.8 662.2 399.6 664.9 396.9 665.9C394.1 666.9 388.3 667.6 384.4 667.5C380.5 667.3 376 666.3 373.4 665.1C370.8 664 369.5 661.7 368.8 660.4C368 659.1 367.2 657.3 368.8 657.3Z"/>
<path d="M309.4 674.5C309.6 673.2 309.6 668.5 310.9 666.7C312.2 664.9 314.8 663.7 317.2 663.6C319.5 663.4 322.4 665 325 665.9C327.6 666.8 330.7 667.6 332.8 669C334.9 670.5 336.7 673.6 337.5 674.5"/>
<path d="M34.4 713.8C35.4 712.7 34.1 707.4 35.2 705.2C36.2 703.1 38.7 701.1 40.6 700.9C42.6 700.6 45.1 702.2 46.9 703.7C48.7 705.2 50.4 707.5 51.6 709.9C52.7 712.4 52.1 715.9 53.9 718.5C55.7 721.1 58.5 723.2 62.5 725.6C66.5 727.9 72.7 730.6 78.1 732.6C83.6 734.5 91.5 736 95.3 737.3C99.1 738.6 99.6 739 100.8 740.4C102 741.8 102.6 744.2 102.3 745.9C102.1 747.6 100.7 749.7 99.2 750.6C97.8 751.5 94.9 750.2 93.8 751.3C92.6 752.5 93.5 756 92.2 757.6C90.9 759.2 88 760.3 85.9 760.7C83.9 761.1 81.2 760.8 79.7 759.9C78.1 759 77.1 757.1 76.6 755.2C76 753.4 77.9 750.6 76.6 749C75.3 747.4 72.1 747.4 68.8 745.9C65.4 744.3 60.7 742 56.2 739.6C51.8 737.3 45.6 733 42.2 731.8C38.8 730.6 38.3 732.6 35.9 732.6C33.6 732.6 30.5 732.6 28.1 731.8C25.8 731 23.3 729.5 21.9 727.9C20.4 726.3 19.4 724.4 19.5 722.4C19.7 720.5 21.1 717.9 22.7 716.2C24.2 714.5 27 712.7 28.9 712.3C30.9 711.9 33.3 715 34.4 713.8Z"/>
<path d="M163.3 721.7C163.9 720 165 715.9 166.4 713.8C167.8 711.8 169.7 710.1 171.9 709.2C174.1 708.2 177.3 707.7 179.7 708.1C182 708.5 184.5 710 185.9 711.5C187.4 713 188 715.4 188.3 717C188.5 718.5 186.6 720.4 187.5 720.9C188.4 721.4 191.5 719.7 193.8 720.1C196 720.5 199.1 721.8 200.8 723.2C202.5 724.7 203.8 726.9 203.9 728.7C204 730.5 203.1 732.6 201.6 734.2C200 735.7 197.4 737.3 194.5 738.1C191.7 738.8 187.9 739 184.4 738.8C180.9 738.7 177.1 736.8 173.4 737.3C169.8 737.8 166.7 739.9 162.5 742C158.3 744.1 152.6 747.6 148.4 749.8C144.3 752 140.5 754.3 137.5 755.2C134.5 756.2 132.3 756.3 130.5 755.2C128.6 754.2 127.3 751.1 126.6 749C125.9 746.9 125.6 744.7 126.2 742.8C126.9 740.8 128.1 738.7 130.5 737.3C132.9 735.8 136.8 735.3 140.6 734.2C144.4 733 149.5 731.9 153.1 730.2C156.8 728.6 160.8 725.4 162.5 724C164.2 722.6 162.6 723.3 163.3 721.7Z"/>
<path d="M109.4 795.9C108.9 795 108.2 793.1 108.6 791.2C109 789.2 110 786.2 111.7 784.2C113.4 782.1 115.8 780.2 118.8 778.7C121.7 777.1 126 775.6 129.7 774.8C133.3 774 137 773.7 140.6 774C144.3 774.3 148.2 775 151.6 776.3C154.9 777.6 158.1 779.9 160.9 781.8C163.8 783.8 166.9 786 168.8 788.1C170.6 790.1 171.6 792.2 171.9 794.3C172.1 796.4 171.6 799 170.3 800.6C169 802.1 166.1 803.4 164.1 803.7C162 803.9 159.8 803.3 157.8 802.1C155.9 801 154.2 797.8 152.3 796.7C150.5 795.5 148.8 795.1 146.9 795.1C144.9 795.1 142.4 795.6 140.6 796.7C138.8 797.7 137.2 799.9 135.9 801.3C134.6 802.8 134.2 804.6 132.8 805.2C131.4 805.9 128.8 805.9 127.3 805.2C125.9 804.6 124.5 803 124.2 801.3C124 799.7 125.7 796.9 125.8 795.1C125.9 793.3 125.9 791.3 125 790.4C124.1 789.5 122 789.2 120.3 789.6C118.6 790 116.3 791.6 114.8 792.8C113.4 793.9 112.6 796.1 111.7 796.7C110.8 797.2 109.9 796.8 109.4 795.9Z"/>
<path d="M-0.8 751C2 752.3 10.3 756.4 15.6 758.4C21 760.4 26.3 761.4 31.2 763.1C36.2 764.8 41 766.7 45.3 768.5C49.6 770.4 55.5 772.4 57 774C58.6 775.6 56.6 776.6 54.7 777.9C52.7 779.2 47.4 780.4 45.3 781.8C43.2 783.2 41.9 784.8 42.2 786.5C42.4 788.2 43.5 789.9 46.9 792C50.3 794.1 56 796 62.5 799C69 802 78.1 806.7 85.9 809.9C93.8 813.2 101.6 815.7 109.4 818.5C117.2 821.4 125 824.1 132.8 827.1C140.6 830.1 152.3 834.9 156.2 836.5"/>
<path d="M300.8 724C297 724.7 285.3 726.2 278.1 727.9C271 729.6 263 732.2 257.8 734.2C252.6 736.1 249 738.1 246.9 739.6C244.8 741.2 244.8 742.4 245.3 743.5C245.8 744.7 250 745.5 250 746.7C250 747.8 248.4 749.1 245.3 750.6C242.2 752 237 753.6 231.2 755.2C225.5 756.9 217.4 758.9 210.9 760.7C204.4 762.5 196.5 764.4 192.2 766.2C187.9 768 185.9 769.7 185.2 771.7C184.4 773.6 185.3 776.2 187.5 777.9C189.7 779.6 194.3 780.5 198.4 781.8C202.6 783.1 208.9 784.3 212.5 785.7C216.1 787.2 219.3 788.6 220.3 790.4C221.4 792.2 220.8 794.7 218.8 796.7C216.7 798.6 211.3 800.3 207.8 802.1C204.3 803.9 199.2 805.8 197.7 807.6C196.1 809.4 196.5 811.2 198.4 813.1C200.4 814.9 204.7 817 209.4 818.5C214.1 820.1 221.4 821.1 226.6 822.4C231.8 823.7 238.2 824.8 240.6 826.3C243.1 827.9 241.9 830.1 241.4 831.8C240.9 833.5 238.2 835.7 237.5 836.5"/>
<path d="M159.4 673.2C160.4 674.1 162.5 676.9 165.6 678.7C168.8 680.5 173.7 682.6 178.1 684.2C182.6 685.7 188.7 687.2 192.2 688.1C195.7 689 197.5 689.6 199.2 689.6C200.9 689.6 201.8 688.3 202.3 688.1"/>
<path d="M199.2 689.6C198.8 690.1 196.7 691.4 196.9 692.8C197 694.1 197.7 696.1 200 697.4C202.3 698.7 206.5 699.7 210.9 700.6C215.4 701.5 221.1 702.5 226.6 702.9C232 703.3 237.8 703.4 243.8 702.9C249.7 702.4 256.2 701.1 262.5 699.8C268.8 698.5 274.9 696.4 281.2 695.1C287.6 693.8 297.5 692.5 300.8 692"/>
<path d="M232.8 692.8C234.8 692.1 239.6 691.8 243.8 691.2C247.9 690.6 255.2 689.3 257.8 689.3C260.4 689.3 260.2 690.2 259.4 691.2C258.6 692.2 255.7 693.9 253.1 695.1C250.5 696.3 246.6 697.8 243.8 698.2C240.9 698.6 237.9 698 235.9 697.4C234 696.9 232.6 695.9 232 695.1C231.5 694.3 230.9 693.4 232.8 692.8Z"/>
<path d="M300.8 745.1C298.3 745.7 290.8 747.3 285.9 749C281.1 750.7 276 752.8 271.9 755.2C267.7 757.7 263.9 760.7 260.9 763.8C257.9 767 255.6 770.5 253.9 774C252.2 777.5 251.4 781.6 250.8 784.9C250.1 788.3 249.6 791.4 250 794.3C250.4 797.2 251.6 800 253.1 802.1C254.7 804.2 256.2 806 259.4 806.8C262.5 807.6 267.4 807.1 271.9 806.8C276.3 806.6 281.1 805.8 285.9 805.2C290.8 804.7 298.3 803.9 300.8 803.7"/>
<path d="M264.1 783.4C264.2 781.6 264.3 777.9 265.6 775.6C266.9 773.2 269.8 770.5 271.9 769.3C274 768.1 276.8 767.9 278.1 768.5C279.4 769.2 279.9 771.3 279.7 773.2C279.4 775.2 278.1 778.2 276.6 780.2C275 782.3 272.3 784.7 270.3 785.7C268.4 786.8 265.9 786.9 264.8 786.5C263.8 786.1 263.9 785.2 264.1 783.4Z"/>
<path d="M300.8 761.5C300.3 762.5 297.7 765.4 297.7 767.8C297.7 770.1 300.3 774.3 300.8 775.6"/>
<path d="M260.2 807.6C260.8 808.8 262.6 812.9 264.1 814.6C265.5 816.3 267.4 817.6 268.8 817.8C270.1 817.9 271.2 817 271.9 815.4C272.5 813.8 271.7 808.4 272.7 808.4C273.6 808.4 275.9 813.7 277.3 815.4C278.8 817.1 280.3 818.7 281.2 818.5C282.2 818.4 282.7 816.4 282.8 814.6C282.9 812.8 282.2 808.8 282 807.6"/>
<path d="M287.5 806.8C288 808 289.5 812.2 290.6 813.8C291.8 815.5 293.5 817.1 294.5 817C295.6 816.8 296.5 814.9 296.9 813.1C297.3 811.2 296.9 807.2 296.9 806"/>
<path d="M300.8 836.5C299.3 836.2 294.7 835.5 292.2 834.9C289.7 834.4 286.6 834.2 285.9 833.4C285.3 832.6 287.2 831.9 288.3 830.2C289.3 828.6 290.9 823.6 292.2 823.2C293.5 822.8 294.7 826.5 296.1 827.9C297.5 829.3 300 831.2 300.8 831.8"/>
<path d="M299.2 692C301.4 691.4 308.2 690 312.5 688.8C316.8 687.7 320.6 686 325 684.9C329.4 683.9 334.4 682.7 339.1 682.6C343.8 682.5 348.4 683.6 353.1 684.2C357.8 684.7 362.8 685.8 367.2 685.7C371.6 685.6 375.8 684.5 379.7 683.4C383.6 682.2 387 680.1 390.6 678.7C394.3 677.3 398.4 675.7 401.6 674.8C404.7 673.9 408.1 673.5 409.4 673.2"/>
<path d="M310.9 673.2C312.5 673.7 316.9 676 320.3 676.3C323.7 676.7 328.4 676.1 331.2 675.6C334.1 675 336.5 673.6 337.5 673.2"/>
<path d="M299.2 742.3C300.7 740.8 305.1 736.7 307.8 733.4C310.5 730.1 312.5 726.3 315.6 722.4C318.8 718.5 322.4 713.5 326.6 709.9C330.7 706.4 335.9 703.6 340.6 701.3C345.3 699.1 350 697.6 354.7 696.7C359.4 695.7 364.3 695.2 368.8 695.6C373.2 696 377.1 697.4 381.2 699C385.4 700.6 390.1 703 393.8 705.2C397.4 707.5 400.5 709.9 403.1 712.3C405.7 714.6 407.9 716.8 409.4 719.3C410.8 721.8 411.6 724.5 411.7 727.1C411.8 729.7 410.8 732.6 410.2 734.9C409.5 737.3 407.9 738.6 407.8 741.2C407.7 743.8 408.3 748 409.4 750.6C410.4 753.2 413 754.5 414.1 756.8C415.1 759.2 415.8 762.3 415.6 764.6C415.5 767 414.3 769.3 413.3 770.9C412.2 772.4 410 773.5 409.4 774"/>
<path d="M299.2 724C300.7 723.9 305.1 723.1 307.8 723.2C310.5 723.3 314.3 724.5 315.6 724.8"/>
<path d="M328.9 747.4C329 744.3 329.3 740 330.5 736.5C331.6 733 333.5 728.7 335.9 726.3C338.4 724 342.4 722.7 345.3 722.4C348.2 722.2 351 723 353.1 724.8C355.2 726.6 357 730.1 357.8 733.4C358.6 736.6 358.6 740.7 358.1 744.3C357.6 748 356.3 752.3 354.7 755.2C353.1 758.2 350.8 760.6 348.4 762.3C346.1 764 343.1 765.5 340.6 765.4C338.2 765.3 335.4 763.2 333.6 761.5C331.8 759.8 330.5 757.6 329.7 755.2C328.9 752.9 328.8 750.6 328.9 747.4Z"/>
<path d="M371.1 742.8C371 739.8 371.5 735.8 372.7 733.4C373.8 730.9 376 728.7 378.1 727.9C380.2 727.1 383.2 727.6 385.2 728.7C387.1 729.7 388.9 732.1 389.8 734.2C390.8 736.2 390.6 738.7 390.6 741.2C390.6 743.7 389.3 746.9 389.8 749C390.4 751.1 392.7 752.1 393.8 753.7C394.8 755.2 396.4 757.3 396.1 758.4C395.8 759.4 394 759.4 392.2 759.9C390.4 760.5 387.4 761.8 385.2 761.5C382.9 761.2 380.9 760.1 378.9 758.4C377 756.7 374.7 753.9 373.4 751.3C372.1 748.7 371.2 745.7 371.1 742.8Z"/>
<path d="M299.2 761.5C300.1 760.7 302.7 757.7 304.7 756.8C306.6 755.9 309.1 755.5 310.9 756C312.8 756.6 314.7 758 315.6 759.9C316.5 761.9 316.8 765.3 316.4 767.8C316 770.2 314.8 773.1 313.3 774.8C311.7 776.5 309.4 777.6 307 777.9C304.7 778.2 300.5 776.6 299.2 776.3"/>
<path d="M299.2 803.7C301.4 802.9 307.7 801.1 312.5 799C317.3 796.9 322.4 794.1 328.1 791.2C333.9 788.3 340.1 784.4 346.9 781.8C353.6 779.2 362 776.7 368.8 775.6C375.5 774.4 382.3 774.8 387.5 774.8C392.7 774.8 396.4 775.4 400 775.6C403.6 775.7 407.8 775.6 409.4 775.6"/>
<path d="M390.6 775.1C392.4 775.2 397.9 775.4 401.6 775.6C405.2 775.7 410.7 775.8 412.5 775.9" stroke-width="3"/>
<path d="M412.5 775.6C413.3 776.3 416 778.4 417.2 780.2C418.4 782.1 419.5 784.2 419.5 786.5C419.5 788.8 418.9 791.4 417.2 794.3C415.5 797.2 412.8 800.6 409.4 803.7C406 806.8 401.6 810.2 396.9 813.1C392.2 815.9 387 818.3 381.2 820.9C375.5 823.5 368.5 826.1 362.5 828.7C356.5 831.3 348.2 835.2 345.3 836.5"/>
<path d="M400 776.3C397.9 776.7 391.7 777.5 387.5 778.7C383.3 779.9 378.9 781.4 375 783.4C371.1 785.3 367.4 787.5 364.1 790.4C360.7 793.3 357.6 797.3 354.7 800.6C351.8 803.8 349.5 807.1 346.9 809.9C344.3 812.8 342.2 815.4 339.1 817.8C335.9 820.1 332 821.9 328.1 824C324.2 826.1 320.4 828.2 315.6 830.2C310.8 832.3 302 835.5 299.2 836.5"/>
<path d="M333.6 794.3C334.1 794.8 335.4 796.8 336.7 797.4C338 798.1 340.4 798.7 341.4 798.2C342.4 797.7 342.8 796 343 794.3C343.2 792.6 342.6 789.1 342.5 788.1"/>
<path d="M318.8 800.6C319.5 801.5 321.9 804.9 323.4 806C325 807.2 327.2 808.4 328.1 807.6C329 806.8 328.8 803.3 328.9 801.3C329 799.4 328.9 796.8 328.9 795.9"/>
<path d="M303.1 804.5C303.8 805.4 305.6 808.8 307 809.9C308.5 811.1 310.4 812 311.7 811.5C313 811 314.3 808.5 314.8 806.8C315.4 805.1 314.8 802.3 314.8 801.3"/>
<path d="M333.6 817.8C333.6 816.4 332.9 811.4 333.6 809.9C334.2 808.5 336.1 809 337.5 809.2C338.9 809.3 341.4 810.5 342.2 810.7"/>
<path d="M319.5 826.3C319.5 825.4 319 822 319.5 820.9C320.1 819.7 322 819.4 322.7 819.3C323.3 819.2 322.9 820.4 323.4 820.1C324 819.8 324.9 817.8 325.8 817.8C326.7 817.8 328.1 819.4 328.9 820.1C329.7 820.7 330.2 821.4 330.5 821.7"/>
<path d="M304.7 830.2C304.9 829.2 305.5 825.2 306.2 824C307 822.8 308.2 822.8 309.4 823.2C310.5 823.6 312.2 825.3 313.3 826.3C314.3 827.4 315.2 828.9 315.6 829.5"/>
<path d="M403.1 711.5C403.9 711.2 406 709.9 407.8 709.9C409.6 709.9 412 710.5 414.1 711.5C416.1 712.5 418.5 714.1 420.3 716.2C422.1 718.3 423.8 721.1 425 724C426.2 726.9 427.2 730.5 427.3 733.4C427.5 736.2 426.7 739.2 425.8 741.2C424.9 743.1 423.4 744.4 421.9 745.1C420.3 745.7 418.1 745.6 416.4 745.1C414.7 744.6 413 743.3 411.7 742C410.4 740.7 409.1 738.1 408.6 737.3"/>
<path d="M402.3 709.2C403 708.2 405.1 704.7 406.2 703.7C407.4 702.6 408.5 702.4 409.4 702.9C410.3 703.4 411.2 705.6 411.7 706.8C412.2 708 412.4 709.4 412.5 709.9"/>
<path d="M418.8 711.5C421.1 710.3 427.9 706.6 432.8 704.5C437.8 702.4 443.5 700.7 448.4 699C453.4 697.3 458.1 695.7 462.5 694.3C466.9 692.9 471.5 691.3 475 690.4C478.5 689.5 479.9 689.1 483.6 688.8C487.2 688.6 492.3 689 496.9 689.2C501.5 689.3 506.1 689.4 511.2 689.9C516.4 690.5 522.9 691.5 527.5 692.4C532.1 693.4 535.4 694 538.8 695.6C542.1 697.1 545.2 699.8 547.5 701.8C549.8 703.8 550.4 705.9 552.5 707.4C554.6 709 557.5 709.8 560 711.2C562.5 712.5 566.2 714.8 567.5 715.6"/>
<path d="M413.3 707.6C413.8 705.9 415.2 700.3 416.4 697.4C417.6 694.6 418.9 691.8 420.3 690.4C421.7 689 423.4 688.5 425 688.8C426.6 689.2 428.4 691.1 429.7 692.8C431 694.4 431.9 697.3 432.8 699C433.7 700.7 434.8 702.3 435.2 702.9"/>
<path d="M437.5 699.8C438 697.8 439.3 691.4 440.6 688.1C441.9 684.7 443.6 681.4 445.3 679.5C447 677.5 449.2 676.2 450.8 676.3C452.3 676.5 453.6 678.3 454.7 680.2C455.7 682.2 455.9 685.8 457 688.1C458.2 690.3 460.9 692.6 461.7 693.5"/>
<path d="M428.1 728.7C429.4 728.9 433.3 728.9 435.9 730.2C438.5 731.6 441.4 733.9 443.8 736.5C446.1 739.1 448.3 742.5 450 745.9C451.7 749.3 453 752.9 453.9 756.8C454.8 760.7 455.5 765.4 455.5 769.3C455.5 773.2 454.7 777.6 453.9 780.2C453.1 782.9 450.8 783.4 450.8 784.9C450.8 786.5 452.7 788.8 453.9 789.6C455.1 790.4 456.6 790.7 457.8 789.6C459 788.6 459.9 786.5 460.9 783.4C462 780.2 463.3 775.3 464.1 770.9C464.8 766.4 465.8 761.5 465.6 756.8C465.5 752.1 464.5 746.9 463.3 742.8C462.1 738.6 460 735.5 458.6 731.8C457.2 728.2 454.8 723.1 454.7 720.9C454.6 718.7 456.2 718.3 457.8 718.5C459.4 718.8 462 720.5 464.1 722.4C466.1 724.4 468.2 727.1 470.3 730.2C472.4 733.4 474.7 737 476.6 741.2C478.4 745.4 480.3 750.3 481.2 755.2C482.2 760.2 481.8 766.4 482 770.9C482.3 775.3 482.2 779.3 482.8 781.8C483.5 784.3 484.8 785.5 485.9 785.7C487.1 786 488.7 785.3 489.8 783.4C491 781.4 492.2 778.2 493 774C493.8 769.8 494.5 763.3 494.5 758.4C494.5 753.4 494 749.3 493 744.3C491.9 739.4 490.1 733.4 488.3 728.7C486.5 724 483.7 719.3 482 716.2C480.3 713.1 478.3 711.1 478.1 709.9C478 708.8 479.7 708.6 481.2 709.2C482.8 709.7 484.9 711.1 487.5 713.1C490.1 715 493.8 717.5 496.9 720.9C500 724.3 503.4 728.9 506.2 733.4C509.1 737.8 512 743.1 514.1 747.4C516.1 751.7 518 757.2 518.8 759.2"/>
<path d="M439.8 706C441 707.2 444.5 710.3 446.9 713.1C449.2 715.8 452 719.3 453.9 722.4C455.9 725.6 457.8 730.2 458.6 731.8"/>
<path d="M462.5 695.1C463.8 696.5 467.7 700.7 470.3 703.7C472.9 706.7 476.8 711.5 478.1 713.1"/>
<path d="M483.6 688.8C485.5 690 491.8 693.1 495.3 695.9C498.8 698.6 501.8 701.9 504.7 705.2C507.6 708.6 510.2 712.3 512.5 716.2C514.8 720.1 516.9 724.8 518.8 728.7C520.6 732.6 522.3 736.5 523.4 739.6C524.6 742.8 526.6 744.2 525.8 747.4C525 750.7 519.9 757.2 518.8 759.2"/>
<path d="M514.1 713.1C515.1 712.5 519.3 710.5 520.3 709.9"/>
<path d="M519.5 703.7C519.3 701.7 520.6 699.5 521.9 698.2C523.2 696.9 525.3 696 527.3 695.9C529.4 695.7 531.6 696.3 534.4 697.4C537.1 698.6 540.4 700.6 543.8 702.9C547.1 705.2 551.6 708.5 554.7 711.5C557.8 714.5 560.7 718 562.5 720.9C564.3 723.7 565.6 726.1 565.6 728.7C565.6 731.3 564.6 734.4 562.5 736.5C560.4 738.6 556 739.4 553.1 741.2C550.3 743 547.7 744.6 545.3 747.4C543 750.3 540.9 754.7 539.1 758.4C537.2 762 535.7 766.1 534.4 769.3C533.1 772.6 531.5 775.6 531.2 777.9C531 780.2 533.1 781.3 532.8 783.4C532.6 785.5 531.5 788.3 529.7 790.4C527.9 792.5 524.5 794.7 521.9 795.9C519.3 797 516.9 797.6 514.1 797.4C511.2 797.3 507.2 796.4 504.7 795.1C502.2 793.8 500.3 791.6 499.2 789.6C498.2 787.7 497.9 785.3 498.4 783.4C499 781.4 500.5 779.3 502.3 777.9C504.2 776.5 507.2 776.5 509.4 774.8C511.6 773.1 513.5 770.7 515.6 767.8C517.7 764.8 520.1 760.7 521.9 756.8C523.7 752.9 525 748.2 526.6 744.3C528.1 740.4 530.1 736.8 531.2 733.4C532.4 730 533.9 726.9 533.6 724C533.3 721.1 531.4 718.5 529.7 716.2C528 713.8 525.1 712 523.4 709.9C521.7 707.9 519.8 705.6 519.5 703.7Z"/>
<path d="M531.2 790.4C532.8 791.1 537 793.1 540.6 794.3C544.3 795.5 549.2 797 553.1 797.4C557 797.8 561.5 796.4 564.1 796.7C566.7 796.9 567.8 797.6 568.8 799C569.7 800.4 570.1 803.2 569.5 805.2C569 807.3 567.3 809.9 565.6 811.5C563.9 813.1 560.9 813.7 559.4 814.6C557.8 815.5 556.8 816.6 556.2 817"/>
<path d="M515.6 797.4C514.7 797.6 511.2 798 510.2 798.2C509.1 798.5 509.2 798.1 509.4 799C509.5 799.9 509.4 802.4 510.9 803.7C512.5 805 515.4 805.9 518.8 806.8C522.1 807.7 527.1 808.4 531.2 809.2C535.4 809.9 540.1 810.5 543.8 811.5C547.4 812.5 551 814.5 553.1 815.4C555.2 816.3 555.7 816.7 556.2 817"/>
<path d="M540.6 811.5C539.1 812.3 534.9 814.5 531.2 816.2C527.6 817.9 522.9 820.2 518.8 821.7C514.6 823.1 509.4 824 506.2 824.8C503.1 825.6 501.4 825.4 500 826.3C498.6 827.3 497.7 828.6 497.7 830.2C497.7 831.9 499.6 835.5 500 836.5"/>
<path d="M556.2 817C557 817.5 560 818.8 560.6 820.1C561.2 821.4 560.1 824 560 824.8"/>
<path d="M554.7 818.5C552.9 819.3 547.4 821.5 543.8 823.2C540.1 824.9 535.8 827 532.8 828.7C529.8 830.4 527 832.6 525.8 833.4"/>
<path d="M20.3 845.3C21.6 845.2 25.8 844.3 28.1 844.5C30.5 844.8 32.8 845.7 34.4 846.9C35.9 848 37 850.8 37.5 851.6C37.1 849.7 36.2 844 35.2 840.6C34.1 837.2 32.4 833.7 31.2 831.2C30.1 828.8 28 827.1 28.1 825.8C28.3 824.4 30.5 823.1 32 823.1C33.6 823.1 35.5 824.2 37.5 825.8C39.5 827.4 42.1 830.6 43.8 832.8C45.4 835 46.9 837 47.7 839.1C48.4 841.1 48.3 844.3 48.4 845.3C48.3 843 47.6 835.7 47.7 831.2C47.7 826.8 48 822.1 48.8 818.8C49.5 815.4 50.8 811.8 52 811.2C53.3 810.7 55 813.6 56.2 815.6C57.5 817.7 58.7 820.1 59.4 823.4C60 826.8 60.2 830.9 60.2 835.9C60.1 841 59.2 850.9 59.1 853.9C59.6 852 60.9 845.7 62.5 842.2C64.1 838.7 66.4 835.4 68.8 832.8C71.1 830.2 74.1 828.2 76.6 826.6C79 824.9 82.2 823.1 83.6 823.1C85 823.1 85.5 824.4 85.2 826.6C84.8 828.7 82.7 832.6 81.2 835.9C79.8 839.3 78.5 842.8 76.6 846.9C74.6 850.9 70.7 857.9 69.5 860.2C70.7 857.9 74.1 850.4 76.6 846.9C79 843.4 81.8 840.8 84.4 839.1C87 837.3 90 836.4 92.2 836.2C94.4 836.1 96.9 836.8 97.7 838.3C98.4 839.8 97.8 843.1 96.9 845.3C96 847.5 94.1 849.5 92.2 851.6C90.2 853.6 87.1 856.2 85.2 857.8C83.2 859.4 81.2 860.4 80.5 860.9C81.9 860.5 86.1 858.7 89.1 858.1C92.1 857.6 96.4 857.3 98.4 857.5C100.5 857.7 101.8 858.4 101.6 859.4C101.3 860.3 99.5 862.1 96.9 863.3C94.3 864.5 89.8 865.4 85.9 866.4C82 867.4 77.9 868.8 73.4 869.5C69 870.3 63.5 870.8 59.4 871.1C55.2 871.4 51.3 871.7 48.4 871.1C45.6 870.4 44.8 868.9 42.2 867.2C39.6 865.5 35.5 863.5 32.8 860.9C30.1 858.3 27.9 854.2 25.8 851.6C23.7 849 21.2 846.4 20.3 845.3"/>
<path d="M156.2 836.6C157.6 837.2 161.1 839 164.1 840.6C167.1 842.2 170.8 844.1 174.2 846.1C177.6 848 181.1 850.1 184.4 852.3C187.6 854.6 191.7 857.4 193.8 859.4C195.8 861.3 197.1 862.6 196.9 864.1C196.6 865.5 194.8 867.1 192.2 868C189.6 868.9 184.6 869.1 181.2 869.5C177.9 869.9 174.2 869.7 171.9 870.3C169.5 871 168.1 872.3 167.2 873.4C166.3 874.6 166.5 876.7 166.4 877.3C164.7 876.7 159.5 875 156.2 873.4C153 871.9 149.5 869.8 146.9 868C144.3 866.1 141.8 864.2 140.6 862.5C139.5 860.8 139.3 859.1 139.8 857.8C140.4 856.5 141.5 855.3 143.8 854.7C146 854 149.7 854.2 153.1 853.9C156.5 853.6 161.1 853.5 164.1 853.1C167.1 852.7 169.4 852.7 171.1 851.6C172.8 850.4 173.7 847 174.2 846.1"/>
<path d="M166.4 877.3C167.3 878.3 168.9 880.9 171.9 882.8C174.9 884.8 180.2 887 184.4 889.1C188.5 891.1 192.7 893.4 196.9 895.3C201 897.3 207.3 899.9 209.4 900.8"/>
<path d="M237.5 836.6C236.5 836.8 232.7 837.3 231.2 838.3C229.8 839.2 228.4 840.8 228.9 842.2C229.4 843.6 231.4 845.3 234.4 846.9C237.4 848.4 242.2 850 246.9 851.6C251.6 853.1 257.3 854.9 262.5 856.2C267.7 857.6 271.7 858.3 278.1 859.4C284.5 860.4 297 862 300.8 862.5"/>
<path d="M285.9 833.4C286.2 834.4 286.2 837.3 287.5 839.1C288.8 840.8 291.5 842.6 293.8 843.8C296 844.9 299.6 845.7 300.8 846.1"/>
<path d="M422.7 830.5C422.7 828.8 423.3 825.8 425 823.4C426.7 821.1 429.7 818.4 432.8 816.4C435.9 814.5 440.2 812.8 443.8 811.7C447.3 810.7 451.2 810 453.9 810.2C456.6 810.3 458.9 811.5 460.2 812.5C461.5 813.5 462.4 815.4 461.7 816.4C461.1 817.4 458.7 817.8 456.2 818.8C453.8 819.7 449.9 820.4 446.9 821.9C443.9 823.3 440.9 825.5 438.3 827.3C435.7 829.2 433.5 831.8 431.2 832.8C429 833.9 426.4 834 425 833.6C423.6 833.2 422.7 832.2 422.7 830.5Z"/>
<path d="M437.5 827.3C438.8 826.6 442.2 824.1 445.3 822.7C448.4 821.2 453.1 819.6 456.2 818.8C459.4 817.9 461.8 817.2 464.1 817.5C466.3 817.8 468.8 819.1 469.5 820.3C470.3 821.6 469.9 823.8 468.8 825C467.6 826.2 465 826.4 462.5 827.3C460 828.3 456.5 829 453.9 830.5C451.3 831.9 449 834.1 446.9 835.9C444.8 837.8 443.1 840.6 441.4 841.4C439.7 842.2 437.9 841.7 436.7 840.9C435.5 840.2 434.3 838.3 434.1 836.7C433.8 835.1 435 832.2 435.2 831.2"/>
<path d="M345.3 836.6C343.5 837.5 338.3 840.5 334.4 842.2C330.5 843.8 326 845.6 321.9 846.4C317.7 847.2 313.2 847.1 309.4 846.9C305.6 846.7 300.9 845.6 299.2 845.3"/>
<path d="M299.2 862.5C302.5 863.2 312.1 865.1 318.8 866.4C325.4 867.7 331.8 869.1 339.1 870.3C346.4 871.5 355.2 872.3 362.5 873.4C369.8 874.6 377.1 876 382.8 877.3C388.5 878.6 393.5 879.8 396.9 881.2C400.3 882.7 402.6 884.1 403.1 885.9C403.6 887.8 401.6 890.5 400 892.2C398.4 893.9 395.1 894.7 393.8 896.1C392.4 897.5 392.4 900 392.2 900.8"/>
<path d="M497.7 830.5C498 831.4 498.3 834.6 500 835.9C501.7 837.2 505.3 837.6 507.8 838.3C510.3 838.9 513 838.7 514.8 839.8C516.7 841 517.1 844 518.8 845.3C520.4 846.6 522.9 848 525 847.7C527.1 847.3 529.2 844.7 531.2 843C533.3 841.3 535.2 839.1 537.5 837.5C539.8 835.9 542.2 835.3 545.3 833.6C548.4 831.9 553.6 829.3 556.2 827.3C558.9 825.4 560.4 823.4 560.9 821.9C561.5 820.3 559.6 818.6 559.4 818"/>
<path d="M499.2 836.2C497.8 836.1 493.4 834.6 490.6 835.2C487.9 835.8 485 837.9 482.8 839.8C480.6 841.8 478.6 844.5 477.3 846.9C476 849.2 475.1 851.8 475 853.9C474.9 856 475.7 858.3 476.6 859.4C477.5 860.4 479.2 860.9 480.5 860.2C481.8 859.4 482.4 856.6 484.4 854.7C486.3 852.7 489.3 850.4 492.2 848.4C495.1 846.5 499 844.3 501.6 843C504.2 841.7 506.8 841 507.8 840.6"/>
<path d="M504.7 839.8C506.2 840.1 512.5 841.1 514.1 841.4" stroke-width="3"/>
<path d="M507.8 840.9C506.5 841.7 502.1 843.3 500 845.3C497.9 847.3 496.2 850.4 495.3 853.1C494.4 855.9 494.3 859.5 494.5 861.7C494.8 863.9 495.7 865.8 496.9 866.4C498 867.1 500 866.9 501.6 865.6C503.1 864.3 504.4 860.8 506.2 858.6C508.1 856.4 510.4 854 512.5 852.3C514.6 850.7 517.7 849.1 518.8 848.4"/>
<path d="M270.3 401.6C272.1 400.7 276.8 397.4 281.2 396.1C285.7 394.8 291.1 394.3 296.9 393.8C302.6 393.2 309.4 392.4 315.6 393C321.9 393.5 328.1 394.9 334.4 396.9C340.6 398.8 346.9 401.6 353.1 404.7C359.4 407.8 366.1 411.7 371.9 415.6C377.6 419.5 382.8 423.7 387.5 428.1C392.2 432.6 396.9 438.3 400 442.2C403.1 446.1 404.8 449.3 406.2 451.6C407.7 453.8 408.2 454.8 408.6 455.5"/>
<path d="M289.1 426.6C288.3 426.2 286.3 425.5 284.4 424.2C282.4 422.9 279.3 421 277.3 418.8C275.4 416.5 273.7 413.5 272.7 410.9C271.6 408.3 271.4 404.4 271.1 403.1C273.3 402.8 279.6 401.4 284.4 401.2C289.2 401.1 294.3 401.4 300 402.3C305.7 403.3 312.5 405.1 318.8 407C325 409 331.2 411.2 337.5 414.1C343.8 416.9 350.3 420.7 356.2 424.2C362.2 427.7 367.7 431.4 373.4 435.2C379.2 438.9 384.8 443.4 390.6 446.9C396.5 450.4 405.6 454.7 408.6 456.2C407.4 456.8 404.3 458.5 401.6 459.4C398.8 460.3 395.3 461.2 392.2 461.7C389.1 462.2 384.4 462.4 382.8 462.5"/>
<path d="M304.7 392.2C306 390.4 309.6 385.2 312.5 381.2C315.4 377.3 318.8 372.4 321.9 368.8C325 365.1 328.4 361.3 331.2 359.4C334.1 357.4 335.7 357.2 339.1 357C342.4 356.9 347.7 357.4 351.6 358.6C355.5 359.8 359.1 362.2 362.5 364.1C365.9 365.9 369 367.4 371.9 369.5C374.7 371.6 377.3 373.8 379.7 376.6C382 379.3 384.2 382.6 385.9 385.9C387.6 389.3 389.1 392.4 389.8 396.9C390.6 401.3 390.4 408.1 390.6 412.5C390.9 416.9 391.3 421.6 391.4 423.4"/>
<path d="M311.7 382C313.7 381.9 318.9 381 323.4 381.2C328 381.5 333.9 382.2 339.1 383.6C344.3 385 349.5 387.4 354.7 389.8C359.9 392.3 365.6 395.6 370.3 398.4C375 401.3 379.6 404.7 382.8 407C386.1 409.4 388.7 411.6 389.8 412.5"/>
<path d="M300 403.9C299 405.9 295.7 411.3 293.8 415.6C291.8 419.9 290 425 288.3 429.7C286.6 434.4 285.2 438.8 283.6 443.8C282 448.7 280.3 454.2 278.9 459.4C277.5 464.6 276 470.3 275 475C274 479.7 272.9 483.9 272.7 487.5C272.4 491.1 272.7 494.6 273.4 496.9C274.1 499.2 275.1 498.9 276.9 501.2C278.7 503.6 281.8 508.8 284.4 511.2C286.9 513.7 288.8 514.5 292.2 516.1C295.6 517.7 300.3 519.7 304.7 520.8C309.1 521.8 314.1 522.6 318.8 522.3C323.4 522.1 328.6 520.5 332.8 519.2C337 517.9 340.8 516 343.8 514.5C346.7 513.1 349.6 511.3 350.8 510.6"/>
<path d="M293.8 407.8C293.1 409.1 290.6 413 289.8 415.6C289.1 418.2 289.2 422.1 289.1 423.4"/>
<path d="M298.4 418.8C299.6 417.7 303.4 416.7 306.2 415.6C309.1 414.6 313.3 413 315.6 412.5C318 412 319.7 411.7 320.3 412.5C321 413.3 320.8 415.8 319.5 417.2C318.2 418.6 315.2 420.2 312.5 421.1C309.8 422 305.3 422.5 303.1 422.7C300.9 422.8 300 422.5 299.2 421.9C298.4 421.2 297.3 419.8 298.4 418.8Z"/>
<path d="M337.5 418C338.7 417.2 341.4 415.5 343.8 416.4C346.1 417.3 349.1 420.7 351.6 423.4C354 426.2 357.6 430.6 358.6 432.8C359.6 435 359.2 436.7 357.8 436.7C356.4 436.7 352.7 434.5 350 432.8C347.3 431.1 343.6 428.5 341.4 426.6C339.2 424.6 337.4 422.5 336.7 421.1C336.1 419.7 336.3 418.8 337.5 418Z"/>
<path d="M294.5 442.2C294.7 439.7 294.7 435.2 296.1 432.8C297.5 430.5 300.7 428.6 303.1 428.1C305.6 427.6 309 428.1 310.9 429.7C312.9 431.2 314.5 434.6 314.8 437.5C315.2 440.4 314.5 444.4 313.3 446.9C312.1 449.3 310 451.6 307.8 452.3C305.6 453.1 302.1 452.3 300 451.6C297.9 450.8 296.2 449.2 295.3 447.7C294.4 446.1 294.4 444.7 294.5 442.2Z"/>
<ellipse cx="303.9" cy="442.2" rx="4.2" ry="5.9" transform="rotate(10 303.9 442.2)"/>
<path d="M316.4 431.2C316.8 432.3 318.6 434.9 318.8 437.5C318.9 440.1 318.2 444.3 317.2 446.9C316.1 449.5 313.3 452.1 312.5 453.1"/>
<ellipse cx="338.3" cy="450" rx="10.2" ry="14.4" transform="rotate(5 338.3 450.0)"/>
<ellipse cx="336.7" cy="451.6" rx="4.7" ry="5.9" transform="rotate(5 336.7 451.6)"/>
<path d="M307.8 453.1C306.9 453.6 303.7 454.8 302.3 456.2C301 457.7 299.8 459.9 299.7 461.7C299.6 463.5 300.2 465.6 301.6 467.2C302.9 468.8 305.2 470.2 307.8 471.1C310.4 472 315.6 472.4 317.2 472.7"/>
<path d="M285.2 490.6C285.2 488.3 286.1 484.9 287.5 482.8C288.9 480.7 290.6 479 293.8 478.1C296.9 477.2 302.1 477.1 306.2 477.3C310.4 477.6 315.1 478.5 318.8 479.7C322.4 480.9 325.8 482.3 328.1 484.4C330.5 486.5 331.9 489.6 332.8 492.2C333.7 494.8 333.9 497.8 333.6 500C333.3 502.2 332.4 504.4 331.2 505.5C330.1 506.5 328.1 507 326.6 506.2C325 505.5 324 502.6 321.9 500.8C319.8 499 317.2 496.6 314.1 495.3C310.9 494 306.2 493.1 303.1 493C300 492.8 297.4 493.6 295.3 494.5C293.2 495.4 291.9 498 290.6 498.4C289.3 498.8 288.4 498.2 287.5 496.9C286.6 495.6 285.2 493 285.2 490.6Z"/>
<path d="M297.7 478.9C298.3 479.7 299.1 482.3 301.6 483.6C304 484.9 308.9 486.5 312.5 486.7C316.1 487 321.1 485.8 323.4 485.2C325.8 484.5 326 483.2 326.6 482.8"/>
<path d="M290.6 497.7C291.7 496.6 293.8 492.7 296.9 491.4C300 490.1 305.5 489.3 309.4 489.8C313.3 490.4 317.4 492.2 320.3 494.5C323.2 496.9 325.5 502.3 326.6 503.9"/>
<path d="M371.9 428.1C371.1 429.7 368.4 433.9 367.2 437.5C366 441.1 365.1 445.8 364.8 450C364.6 454.2 365.2 459.4 365.6 462.5C366 465.6 366.9 467.7 367.2 468.8"/>
<path d="M387.5 439.8C387.1 441.5 386.2 446.2 385.2 450C384.1 453.8 381.9 460.4 381.2 462.5"/>
<path d="M367.2 468.8C368.2 468.1 371.1 465.4 373.4 464.8C375.8 464.3 379.3 464.7 381.2 465.6C383.2 466.5 384.6 468 385.2 470.3C385.7 472.7 385.3 476.6 384.4 479.7C383.5 482.8 381.8 486.6 379.7 489.1C377.6 491.5 374.7 493.6 371.9 494.5C369 495.4 364.6 494.8 362.5 494.5C360.4 494.3 360.5 491.8 359.4 493C358.2 494.1 356.9 498.6 355.5 501.6C354 504.5 351.6 509.1 350.8 510.6"/>
<path d="M378.1 473.4C377.1 473.7 373.6 474 371.9 475C370.2 476 368.2 478.1 368 479.7C367.7 481.2 369.9 483.6 370.3 484.4"/>
<path d="M332.8 519.2C334.6 518.4 340.8 516 343.8 514.5C346.7 513.1 349.6 511.3 350.8 510.6" stroke-width="3.2"/>
<path d="M265.6 495C264.3 496 260.2 498.9 257.8 501.2C255.5 503.6 253.1 506.8 251.6 509.1C250 511.3 249 513.6 248.4 514.5"/>
<path d="M275 504.4C273.4 505.7 268.4 509.5 265.6 512.2C262.9 514.9 259.8 519.3 258.6 520.8"/>
<path d="M285.2 514.5C284.8 515.7 283.6 519.2 282.8 521.6C282 523.9 280.2 526.1 280.5 528.6C280.7 531.1 283.7 535.1 284.4 536.4C285.7 535.6 289.6 533.5 292.2 531.7C294.8 529.9 298.2 526.9 300 525.5C301.8 524 302.6 523.5 303.1 523.1"/>
<path d="M295.3 528.6C295.8 529.8 298.2 533.2 298.4 535.6C298.7 538.1 297.1 542.1 296.9 543.4"/>
<path d="M314.8 524.7C315.6 526.2 317.8 530.7 319.5 534.1C321.2 537.4 324.1 543.2 325 545C326.3 543.7 330.2 539.8 332.8 537.2C335.4 534.6 338.4 532.2 340.6 529.4C342.8 526.5 344.5 522.9 346.1 520C347.7 517.1 349.3 513.5 350 512.2"/>
<path d="M318.8 535.6C318 536.7 315.2 539.5 314.1 541.9C312.9 544.2 312.2 547.1 311.7 549.7C311.2 552.3 311.1 556.2 310.9 557.5"/>
<path d="M341.4 529.4C340.5 531.5 337.9 537.2 335.9 541.9C334 546.6 331.2 552.8 329.7 557.5C328.1 562.2 327.1 567.9 326.6 570"/>
<path d="M253.9 543.4C253.4 546.3 251.8 554.1 250.8 560.6C249.7 567.1 248.3 575.7 247.7 582.5C247 589.3 247 598.1 246.9 601.2"/>
<path d="M269.5 555.2C268.4 558.9 265 569.9 262.5 577.8C260 585.8 256 598.6 254.7 602.8"/>
<path d="M285.2 567.7C283.7 571.4 279.3 583 276.6 590.3C273.8 597.6 270.1 607.9 268.8 611.4"/>
<path d="M307 582.5C306.4 585.6 304.4 595.3 303.1 601.2C301.8 607.2 299.9 615.6 299.2 618.4"/>
<path d="M319.5 592.7C318.6 595.1 315.6 602.9 314.1 607.5C312.5 612.1 310.8 617.9 310.2 620"/>
<path d="M332.8 602.8C331.9 604.6 328.9 610.9 327.3 613.8C325.8 616.6 324.1 619 323.4 620"/>
<path d="M229.7 594.8C232.6 596.2 240.6 599.9 246.9 602.8C253.1 605.7 260.9 609.5 267.2 612.2C273.4 614.9 279.4 617.8 284.4 619.2C289.3 620.7 292.7 620.7 296.9 620.8C301 620.9 304.7 620.1 309.4 620C314.1 619.9 318.2 619.9 325 620C331.8 620.1 345.8 620.3 350 620.3"/>
<path d="M190.6 500C190 498.8 187.9 494.4 187 492.5C186.1 490.6 185.3 490.6 185.1 488.7C184.9 486.8 185.1 483.7 185.7 481.2C186.3 478.7 188.4 474.9 188.9 473.7C191.1 475.4 196.5 479.7 202 483.7C207.5 487.7 214.5 492.3 222 497.5C229.5 502.7 238.7 509.2 247 515C255.3 520.8 263.7 526.5 272 532.5C280.3 538.5 288.7 545 297 551.2C305.3 557.5 313.7 563.8 322 570C330.3 576.2 338.9 582.6 347 588.7C355.1 594.8 366.4 603.5 370.3 606.5"/>
<path d="M187 492.5C189.7 494.6 197.4 500.8 203.2 505C209 509.2 215.5 513.1 222 517.5C228.5 521.9 235.8 526.6 242 531.2C248.2 535.8 252.4 539.4 259.5 545C266.6 550.6 276.2 558.5 284.5 565C292.8 571.5 302.8 578.7 309.5 583.7C316.2 588.7 317.1 589.9 324.5 595C331.9 600.1 349 611.1 353.9 614.3"/>
<ellipse cx="577.7" cy="438.5" rx="17.2" ry="6.4" transform="rotate(2 577.7 438.5)"/>
<path d="M571 432.1C570.3 431.3 568.1 429 566.9 427.4C565.7 425.8 564.5 424.2 563.9 422.7C563.3 421.2 563.2 419.4 563.6 418.7C564 417.9 565.2 417.9 566.3 418.3C567.3 418.8 568.6 420.3 569.6 421.3C570.6 422.4 571.5 423.6 572.3 424.7C573.1 425.8 574 427.2 574.3 427.7C574.1 426.6 573.1 423.3 573 420.7C572.8 418 573 414.5 573.3 411.9C573.6 409.3 574.2 406.7 574.7 405.2C575.2 403.7 575.9 402.8 576.3 402.8C576.8 402.8 577 403.5 577.4 405.2C577.7 406.9 578.1 410.2 578.4 413.3C578.6 416.3 578.9 421.7 579 423.4C579.2 422 579.2 418.1 579.7 415.3C580.3 412.5 581.3 409.1 582.4 406.5C583.5 404 585.3 401.3 586.4 399.8C587.6 398.3 588.5 397.5 589.1 397.5C589.8 397.5 590.3 398.5 590.5 399.8C590.6 401.1 590.6 403.2 590.1 405.2C589.7 407.2 588.4 409.9 587.8 411.9C587.2 413.9 586.8 415.6 586.4 417.3C586.1 419 586.1 420.7 585.8 422C585.4 423.3 584.6 424.5 584.4 425C584.9 424.4 586 422.4 587.1 421.3C588.2 420.3 590 419.6 591.2 418.7C592.3 417.8 593.2 416 593.8 416C594.5 416 594.9 417.4 595.2 418.7C595.5 419.9 596.2 421.7 595.9 423.4C595.5 425 594.3 427.1 593.2 428.8C592.1 430.4 589.8 432.7 589.1 433.5"/>
<path d="M-0.7 518.9C-0.1 518.1 1.9 516.1 2.7 514.2C3.5 512.3 3.1 510 4 507.5C4.9 505 6.9 501.6 8.1 499.4C9.2 497.2 10.5 494.3 11 494.3C11.6 494.3 11.6 497 11.4 499.4C11.3 501.8 10.5 505.8 10.1 508.8C9.7 511.9 9.3 516.1 9.2 517.6C9.6 517.1 10.9 515.6 12.1 514.9C13.3 514.2 14.8 513.4 16.2 513.5C17.5 513.7 18.7 514.3 20.2 515.6C21.6 516.8 24.1 520.3 24.9 521.2"/>
<path d="M12.8 528.4C13 527.3 13.5 524.1 14.1 522.3C14.8 520.5 15.8 518.6 16.8 517.6C17.8 516.6 19.6 516.5 20.2 516.2"/>
<path d="M-0.7 530.4C0.8 530.1 5.5 529.3 8.1 529C10.7 528.8 13.2 528.8 14.8 528.8C16.4 528.8 16.9 528.4 17.5 529C18.1 529.6 17.4 531.5 18.2 532.4C19 533.3 21.1 533.6 22.2 534.4C23.3 535.2 24.7 536.1 24.9 537.1C25.1 538.1 24.8 539.7 23.6 540.5C22.3 541.2 19.6 541.5 17.5 541.8C15.4 542.1 12.8 542.1 10.8 542.5C8.7 542.8 7.3 543.7 5.4 543.8C3.5 543.9 0.3 543.3 -0.7 543.2"/>
<path d="M535.6 693.1C536.8 692.3 540.1 689.6 542.5 688.1C544.9 686.7 547.7 685.3 550 684.4C552.3 683.5 554.7 682.6 556.2 682.8C557.8 682.9 559.1 683.6 559.4 685C559.7 686.4 559.1 689 558.1 691.2C557.2 693.5 555 696.7 553.8 698.8C552.5 700.8 551.1 702.9 550.6 703.8"/>
<path d="M559.4 674C559.2 674.5 557.9 676 558.1 676.9C558.3 677.8 559.1 678.9 560.6 679.4C562.2 679.9 565.9 679.6 567.5 680C569.1 680.4 570 681 570 681.9C570 682.7 569 684.2 567.5 685C566 685.8 562.7 686.1 561.2 686.9C559.8 687.6 559.2 689 558.8 689.4"/>
<path d="M551.2 704.4C552.3 704.5 555 705.3 557.5 705C560 704.7 563.3 702.9 566.2 702.5C569.2 702.1 573.4 702 575 702.5C576.6 703 576 704.2 575.6 705.6C575.2 707.1 573.6 709.5 572.5 711.2C571.4 713 569.4 715.4 568.8 716.2"/>
<path d="M555 710C556.2 710.4 560 711.2 562.5 712.5C565 713.8 567.9 715.6 570 717.5C572.1 719.4 574 721.7 575 723.8C576 725.8 576.6 728 576.2 730C575.9 732 574.6 734.1 573.1 735.6C571.7 737.2 569.3 739 567.5 739.4C565.7 739.8 563.3 738.3 562.5 738.1"/>
<path d="M571.2 718.8C572.5 718.8 576.5 718.3 578.8 718.8C581 719.2 583.3 720 585 721.2C586.7 722.5 588.1 724.4 588.8 726.2C589.4 728.1 589.2 730.8 588.8 732.5C588.3 734.2 586.9 734.8 586.2 736.2C585.6 737.7 585.8 739.5 585 741.2C584.2 743 582.7 745.3 581.2 746.9C579.8 748.4 577.9 750.1 576.2 750.6C574.6 751.1 572.9 751.4 571.2 750C569.6 748.6 567.5 744.4 566.2 742.5C565 740.6 564.2 739.4 563.8 738.8"/>
<path d="M590 732.5C590.6 733.3 593 735.4 593.8 737.5C594.5 739.6 594.6 742.5 594.4 745C594.2 747.5 593.6 750.2 592.5 752.5C591.4 754.8 589.6 757.2 587.5 758.8C585.4 760.3 582.3 761.7 580 761.9C577.7 762.1 575.3 761.1 573.8 760C572.2 758.9 571.2 756.6 570.6 755C570 753.4 570.1 751.4 570 750.6"/>
<path d="M595.6 736.2C596.5 737.2 599.8 740.9 600.6 741.9"/>
<path d="M586.9 761.2C587.6 761.9 589.5 764.4 591.2 765C593 765.6 595.9 765.2 597.5 765C599.1 764.8 600.1 763.8 600.6 763.5"/>
<path d="M487.5 687.8C488.1 686.5 490 682.8 491.2 680C492.5 677.2 493.3 673.8 495 671.2C496.7 668.8 499.2 666.4 501.2 665C503.3 663.6 505.7 662.9 507.5 662.8C509.3 662.6 510.8 663.2 511.9 664.4C512.9 665.6 513.6 667.8 513.8 670C513.9 672.2 513 675.2 512.5 677.5C512 679.8 510.7 681.8 510.6 683.8C510.5 685.7 511.7 688.4 511.9 689.4"/>
<path d="M512.2 689.4C512.9 688 514.3 683.9 516.2 681.2C518.2 678.6 521.2 675.9 523.8 673.8C526.2 671.6 529.1 669.4 531.2 668.1C533.4 666.8 535.4 666 536.9 666C538.3 666 539.4 666.8 540 668.1C540.6 669.4 541 671.6 540.6 673.8C540.2 675.9 538.5 679 537.5 681.2C536.5 683.5 534.8 685.5 534.4 687.5C534 689.5 534.9 692.2 535 693.1"/>
<path d="M462.5 693.8C462.8 691.7 463.3 685.2 464.4 681.2C465.4 677.3 467 672.7 468.8 670C470.5 667.3 472.9 665.9 475 665C477.1 664.1 479.5 663.9 481.2 664.4C483 664.9 484.6 666.4 485.6 668.1C486.6 669.9 487 672.6 487.2 675C487.5 677.4 487 680.3 486.9 682.5C486.7 684.7 486.4 687.2 486.2 688.1"/>
<path d="M252.3 647.5C252.6 646.6 255.6 644.2 257.8 643.6C260 642.9 263 642.8 265.6 643.6C268.2 644.4 271.1 646.2 273.4 648.3C275.8 650.4 278.4 653.8 279.7 656.1C281 658.4 281.5 660.7 281.2 662.3C281 664 279.3 666 278.1 666.2C277 666.5 275.5 665.3 274.2 663.9C272.9 662.5 272 659.6 270.3 657.7C268.6 655.7 266.4 653.6 264.1 652.2C261.7 650.8 258.2 649.8 256.2 649.1C254.3 648.3 252.1 648.4 252.3 647.5Z"/>
<path d="M235.2 652.2C234.9 651 238.4 648.3 240.6 647.5C242.8 646.7 245.8 646.7 248.4 647.5C251 648.3 253.9 650.1 256.2 652.2C258.6 654.3 260.8 657.1 262.5 660C264.2 662.9 265.8 666.6 266.4 669.4C267.1 672.1 267.1 674.7 266.4 676.4C265.8 678.1 263.8 679.7 262.5 679.5C261.2 679.4 259.8 677.6 258.6 675.6C257.4 673.7 256.9 670.4 255.5 667.8C254 665.2 252.2 662.2 250 660C247.8 657.8 244.7 655.8 242.2 654.5C239.7 653.2 235.4 653.4 235.2 652.2Z"/>
<path d="M218 661.6C217.8 660.3 221.7 658.2 224.2 657.7C226.7 657.1 230.2 657.3 232.8 658.4C235.4 659.6 237.9 662.3 239.8 664.7C241.8 667 243.5 669.9 244.5 672.5C245.6 675.1 246.2 678.1 246.1 680.3C246 682.5 244.9 685 243.8 685.8C242.6 686.6 240.4 686.2 239.1 685C237.8 683.8 237.2 681.1 235.9 678.8C234.6 676.4 233.1 673.2 231.2 670.9C229.4 668.7 227.2 667 225 665.5C222.8 663.9 218.1 662.9 218 661.6Z"/>
<path d="M201.6 675.6C201.8 674.2 204.2 671.7 206.2 670.9C208.3 670.2 211.6 670.2 214.1 670.9C216.5 671.7 219 673.7 221.1 675.6C223.2 677.6 225.4 680.3 226.6 682.7C227.7 685 228.4 687.9 228.1 689.7C227.9 691.5 226.3 693.1 225 693.6C223.7 694.1 221.7 694 220.3 692.8C218.9 691.6 218 688.4 216.4 686.6C214.8 684.7 212.9 683 210.9 681.9C209 680.7 206.2 680.6 204.7 679.5C203.1 678.5 201.3 677.1 201.6 675.6Z"/>
<path d="M195.6 671.7C195.2 671.3 196.1 667.8 197.2 666.2C198.3 664.7 200.2 663.2 202.3 662.3C204.5 661.5 209.8 660.7 210.2 661.1C210.5 661.5 206.4 663.4 204.7 664.7C203 665.9 201.5 667.4 200 668.6C198.5 669.8 196.1 672.1 195.6 671.7Z"/>
<path d="M253.9 622.5C253.9 621.5 255.3 621.2 257.8 621.7C260.3 622.2 264.6 624.3 268.8 625.6C272.9 626.9 278.1 628.8 282.8 629.5C287.5 630.3 292.7 630.1 296.9 630.3C301 630.6 306.1 630.4 307.8 631.1C309.5 631.7 308.9 633.4 307 634.2C305.2 635 300.9 635.5 296.9 635.8C292.8 636 287.5 636.3 282.8 635.8C278.1 635.3 272.9 634 268.8 632.7C264.6 631.4 260.3 629.7 257.8 628C255.3 626.3 253.9 623.5 253.9 622.5Z"/>
<path d="M294.5 645.9C295.4 645.2 299.6 644.7 303.1 644.4C306.6 644.1 312 644.3 315.6 644.1C319.3 643.8 323.3 642.5 325 642.8C326.7 643.1 326.8 644.8 325.8 645.9C324.7 647.1 322 648.9 318.8 649.8C315.5 650.8 309.8 651.5 306.2 651.4C302.7 651.3 299.6 650 297.7 649.1C295.7 648.2 293.6 646.7 294.5 645.9Z"/>
</svg>
</div>
<div id="vscroll" class="a"></div>
<div class="a" style="left:1579px;top:390px;width:11px;height:328px;background:#6a6a6a"></div>
<svg style="left:1580px;top:95px" width="9" height="6" viewBox="0 0 9 6"><path d="M0.500 5L4.500 1L8.500 5" fill="none" stroke="#8a8a8a" stroke-width="1.100"/></svg>
<svg style="left:1580px;top:1010px" width="9" height="6" viewBox="0 0 9 6"><path d="M0.500 1L4.500 5L8.500 1" fill="none" stroke="#8a8a8a" stroke-width="1.100"/></svg>
<div id="statusbar" class="a"></div>
<div class="a" style="left:88px;top:1023px;width:235px;height:17px;background:#535353"></div>
<div class="t" style="left:55px;top:1027px;font-size:10px;color:#e6e6e6">50%</div>
<div class="t" style="left:136px;top:1027px;font-size:10px;color:#d8d8d8">1200 px x 1800 px (300 ppp)</div>
<svg style="left:312px;top:1026px" width="6" height="10" viewBox="0 0 6 10"><path d="M1 0.500L5 5L1 9.500" fill="none" stroke="#ccc" stroke-width="1.100"/></svg>
<svg style="left:330px;top:1028px" width="5" height="8" viewBox="0 0 5 8"><path d="M4.500 0.500L1 4L4.500 7.500" fill="none" stroke="#8a8a8a" stroke-width="1.100"/></svg>
<div class="a" style="left:679px;top:1026px;width:540px;height:12px;background:#6a6a6a"></div>
<svg style="left:1564px;top:1028px" width="5" height="8" viewBox="0 0 5 8"><path d="M0.500 0.500L4 4L0.500 7.500" fill="none" stroke="#8a8a8a" stroke-width="1.100"/></svg>

<div id="dockgap" class="a"></div>
<div id="dockhead" class="a"></div>
<svg style="left:1619px;top:62px" width="8" height="6" viewBox="0 0 9 7"><path d="M3.500 0.500L0.800 3.500L3.500 6.500M7.800 0.500L5 3.500L7.800 6.500" stroke="#e0e0e0" stroke-width="1.200" fill="none"/></svg>
<svg style="left:1906px;top:62px" width="8" height="6" viewBox="0 0 9 7"><path d="M0.800 0.500L3.500 3.500L0.800 6.500M5 0.500L7.800 3.500L5 6.500" stroke="#e0e0e0" stroke-width="1.200" fill="none"/></svg>
<div id="iconstrip" class="a"></div>
<div id="stripgap" class="a"></div>
<div class="a" style="left:1595px;top:139px;width:38px;height:2px;background:#3a3a3a"></div>
<div class="a" style="left:1595px;top:207px;width:38px;height:2px;background:#3a3a3a"></div>
<svg style="left:1604px;top:75px" width="20" height="4"><path d="M0.500 0v4M2.500 0v4M4.500 0v4M6.500 0v4M8.500 0v4M10.500 0v4M12.500 0v4M14.500 0v4M16.500 0v4M18.500 0v4" stroke="#3f3f3f" stroke-width="1"/></svg>
<svg style="left:1604px;top:144px" width="20" height="4"><path d="M0.500 0v4M2.500 0v4M4.500 0v4M6.500 0v4M8.500 0v4M10.500 0v4M12.500 0v4M14.500 0v4M16.500 0v4M18.500 0v4" stroke="#3f3f3f" stroke-width="1"/></svg>
<svg style="left:1606px;top:84px" width="17" height="19" viewBox="0 0 17 19"><rect x="1" y="1.500" width="4.500" height="4" fill="none" stroke="#d8d8d8" stroke-width="1"/><rect x="1" y="7.700" width="4.500" height="4" fill="none" stroke="#d8d8d8" stroke-width="1"/><rect x="0.500" y="13.500" width="5.500" height="5" fill="#d8d8d8"/><path d="M9.500 3.300C14.500 2.500 16.500 9 10.500 16C13 10 12.500 6.500 9.500 5Z" fill="#d8d8d8"/><path d="M8.500 3.500L13.500 2V6Z" fill="#d8d8d8"/></svg>
<svg style="left:1607px;top:114px" width="15" height="14" viewBox="0 0 15 14"><path d="M1.500 0.500H13.500Q14.500 0.500 14.500 1.500V8.500Q14.500 9.500 13.500 9.500H7L3.500 13V9.500H1.500Q0.500 9.500 0.500 8.500V1.500Q0.500 0.500 1.500 0.500Z" fill="#d8d8d8"/></svg>
<svg style="left:1602px;top:153px" width="22" height="19" viewBox="0 0 22 19"><path d="M1 1.500h2M4.500 1.500h4M1 4.500h2M4.500 4.500h4M1 7.500h2M4.500 7.500h4" stroke="#d8d8d8" stroke-width="1.300"/><path d="M21.500 3.500C18.500 5.500 15 9 13 11.500L14.800 13.300C17 11 20 7 21.800 4Z" fill="#d8d8d8"/><path d="M12.300 12.300C10 12 9.500 14.500 6 17C10 18.300 14.500 16.500 14.500 14.300Z" fill="#d8d8d8"/></svg>
<svg style="left:1604px;top:181px" width="19" height="18" viewBox="0 0 19 18"><path d="M2 4H18M2 12.500H10" stroke="#d8d8d8" stroke-width="1.500"/><ellipse cx="6" cy="4" rx="3.800" ry="2.500" fill="#d8d8d8"/><path d="M11 12.500L17.500 8V17Z" fill="#d8d8d8"/></svg>

<!-- Color panel -->
<div class="panel" style="top:71px;height:320px"></div>
<div class="ptabs" style="top:71px">
<div class="ptab on" style="left:0;width:42px">Color</div>
<div class="ptab" style="left:42px;width:60px">Muestras</div>
<div class="ptab" style="left:102px;width:76px">Degradados</div>
<div class="ptab" style="left:178px;width:56px">Motivos</div>
<div class="hamb"></div>
</div>
<div class="a" style="left:1635px;top:391px;width:285px;height:4px;background:#3a3a3a"></div>
<div class="a" style="left:1655px;top:119px;width:19px;height:20px;background:#1d3c5c;border:1px solid #f4f4f4;box-shadow:0 0 0 1px #3a3a3a"></div>
<div class="a" style="left:1643px;top:108px;width:22px;height:21px;border:1px solid #8a8a8a"></div>
<div class="a" style="left:1644px;top:109px;width:20px;height:19px;background:#e8a127;border:1px solid #f4f4f4;box-shadow:0 0 0 1px #333 inset"></div>
<div class="a" style="left:1680px;top:106px;width:187px;height:265px;background:linear-gradient(to bottom,rgba(0,0,0,0) 0%,rgba(0,0,0,0.15) 25%,rgba(0,0,0,0.44) 50%,rgba(0,0,0,0.74) 75%,rgba(0,0,0,0.92) 90%,#000 96%,#000 100%),linear-gradient(to right,#fff 0%,#fff 2%,#ffab00 84%,#ffab00 100%)"></div>
<div class="a" style="left:1816px;top:147px;width:11px;height:11px;border:1px solid #000;border-radius:50%"></div>
<div class="a" style="left:1884px;top:106px;width:19px;height:265px;background:linear-gradient(to bottom,#ff1010 0%,#ff1010 4%,#ff0080 9%,#ff00ff 19%,#8000ff 28%,#1010ff 33%,#1010ff 37%,#0a80ff 43%,#00e8ff 51%,#00ff80 58%,#00ff10 64%,#00f400 76%,#a0f000 80%,#fff000 85%,#ffa800 90%,#ff5800 95%,#ff1010 98%,#ff1010 100%)"></div>
<svg style="left:1874px;top:336px" width="8" height="9" viewBox="0 0 8 9"><path d="M0.500 1Q0.500 0.500 1 0.500H3.500L7.500 4.500L3.500 8.500H1Q0.500 8.500 0.500 8Z" fill="#e6e6e6"/></svg>

<!-- Bibliotecas panel -->
<div class="panel" style="top:395px;height:320px"></div>
<div class="ptabs" style="top:395px">
<div class="ptab" style="left:0;width:75px">Propiedades</div>
<div class="ptab" style="left:75px;width:52px">Ajustes</div>
<div class="ptab on" style="left:127px;width:69px">Bibliotecas</div>
<div class="hamb"></div>
</div>
<div class="a" style="left:1635px;top:476px;width:285px;height:216px;background:#4b4b4b"></div>
<div class="a" style="left:1635px;top:475px;width:285px;height:1px;background:#484848"></div>
<div class="a" style="left:1635px;top:692px;width:285px;height:1px;background:#474747"></div>
<svg style="left:1647px;top:446px" width="12" height="12" viewBox="0 0 12 12"><circle cx="5" cy="5" r="3.800" fill="none" stroke="#e0e0e0" stroke-width="1.400"/><path d="M7.800 7.800L11 11" stroke="#e0e0e0" stroke-width="1.600"/></svg>
<div class="t" style="left:1667px;top:447px;font-size:10.5px;font-style:italic;color:#707070">Buscar en todas las bibliotecas</div>
<div class="a" style="left:1647px;top:467px;width:260px;height:1px;background:#5e5e5e"></div>
<svg style="left:1754px;top:543px" width="48" height="34" viewBox="0 0 48 34"><path d="M2 3L9 10M9 3L2 10" stroke="#ccc" stroke-width="1.200" fill="none"/><path d="M12 7.500C15 3 22 0.500 28 1.500C37 1 45 7 45 16C45 25 38 31 28 31H15C9 31 5.500 26.500 5.500 21.500C5.500 17 8 13.500 12 12.500" fill="none" stroke="#c8c8c8" stroke-width="1.300"/><path d="M16 11C20 5.500 29 5 33.500 9.500C38.500 9 41.500 13.500 41.500 17.500C41.500 23.500 37 27.500 31 27.500H17C12.500 27.500 9.500 24.500 9.500 20.500C9.500 16 13.500 13 18 14C21 14.500 24 17.500 27.500 20.500C30.500 23 34.500 22.500 35.500 19" fill="none" stroke="#c8c8c8" stroke-width="1.300"/></svg>
<div class="a" id="libmsg" style="left:1667px;top:592px;width:220px;text-align:center;font-size:10.8px;line-height:15px;color:#dadada">Para utilizar las bibliotecas Creative<br>Cloud, debe iniciar sesión en una cuenta<br>de Creative Cloud.</div>
<svg style="left:1650px;top:698px" width="18" height="13" viewBox="0 0 18 13"><path d="M4 11.500C1.500 11.500 0.500 9.500 0.500 8C0.500 6 2 5 3.500 5C4 2.500 6 0.800 8.500 0.800C11 0.800 12.500 2.300 13 4C15 4 16.500 5.500 16.500 7.500" fill="#d0d0d0"/><rect x="3" y="5" width="9" height="6.500" fill="#d0d0d0"/><circle cx="13" cy="9" r="3.800" fill="#d0d0d0" stroke="#535353" stroke-width="1"/><path d="M11.500 7.500L14.500 10.500M14.500 7.500L11.500 10.500" stroke="#535353" stroke-width="1.100"/></svg>
<svg style="left:1885px;top:700px" width="15" height="12" viewBox="0 0 15 12"><path d="M5.500 0.500V10.500M0.500 5.500H10.500" stroke="#999" stroke-width="1.300"/><path d="M11 9.500h3.500l-1.700 2z" fill="#999"/></svg>
<div class="a" style="left:1635px;top:715px;width:285px;height:4px;background:#3a3a3a"></div>

<div class="panel" style="top:719px;height:321px"></div>
<div class="ptabs" style="top:719px">
<div class="ptab on" style="left:0;width:45px">Capas</div>
<div class="ptab" style="left:45px;width:54px">Canales</div>
<div class="ptab" style="left:99px;width:59px">Trazados</div>
<div class="hamb"></div>
</div>
<!-- filter row -->
<div class="box" style="left:1638px;top:755px;width:109px;height:21px;background:#454545;border-color:#666"></div>
<svg style="left:1646px;top:760px" width="11" height="11" viewBox="0 0 11 11"><circle cx="4.300" cy="4.300" r="3.200" fill="none" stroke="#e0e0e0" stroke-width="1.400"/><path d="M6.800 6.800L10 10" stroke="#e0e0e0" stroke-width="1.600"/></svg>
<div class="t" style="left:1661px;top:761px;font-size:10px;color:#e8e8e8">Tipo</div>
<svg style="left:1735px;top:764px" width="8" height="5" viewBox="0 0 8 5"><path d="M0.500 0.500L4 4L7.500 0.500" stroke="#ccc" fill="none" stroke-width="1.100"/></svg>
<svg style="left:1769px;top:760px" width="13" height="11" viewBox="0 0 13 11"><rect x="0.600" y="0.600" width="11.800" height="9.800" rx="1" fill="none" stroke="#ddd" stroke-width="1.200"/><path d="M2.500 8.500L5 4.500L7 7L8.500 5.500L10.500 8.500Z" fill="#ddd"/></svg>
<svg style="left:1794px;top:760px" width="12" height="12" viewBox="0 0 12 12"><circle cx="6" cy="6" r="5" fill="none" stroke="#ddd" stroke-width="1.200"/><path d="M9.600 2.400A5 5 0 0 1 2.400 9.600Z" fill="#ddd"/></svg>
<div class="t" style="left:1818px;top:759px;font-size:14.5px;font-weight:bold;font-family:'Liberation Serif',serif;color:#e0e0e0">T</div>
<svg style="left:1841px;top:760px" width="13" height="13" viewBox="0 0 13 13"><rect x="2" y="2" width="9" height="9" fill="none" stroke="#ddd" stroke-width="1.200"/><rect x="0.500" y="0.500" width="2.800" height="2.800" fill="#535353" stroke="#ddd" stroke-width="0.900"/><rect x="9.700" y="0.500" width="2.800" height="2.800" fill="#535353" stroke="#ddd" stroke-width="0.900"/><rect x="0.500" y="9.700" width="2.800" height="2.800" fill="#535353" stroke="#ddd" stroke-width="0.900"/><rect x="9.700" y="9.700" width="2.800" height="2.800" fill="#535353" stroke="#ddd" stroke-width="0.900"/></svg>
<svg style="left:1867px;top:759px" width="11" height="13" viewBox="0 0 11 13"><path d="M3.500 0.600H7.500L10.400 3.500V12.400H3.500Z" fill="none" stroke="#ddd" stroke-width="1.200"/><path d="M7 0.600V4H10.400" fill="none" stroke="#ddd" stroke-width="1"/><rect x="0" y="6" width="6" height="7" fill="#ddd"/></svg>
<div class="a" style="left:1900px;top:756px;width:10px;height:18px;border:1px solid #3a3a3a;border-radius:5px;background:#4a4a4a"></div>
<div class="a" style="left:1901px;top:756px;width:8px;height:8px;border-radius:50%;background:#e4e4e4"></div>
<div class="a" style="left:1635px;top:779px;width:285px;height:1px;background:#484848"></div>
<!-- blend row -->
<div class="a" style="left:1638px;top:784px;width:164px;height:20px;background:#4d4d4d;border:1px solid #5c5c5c;border-radius:3px"></div>
<div class="t" style="left:1647px;top:789px;font-size:10px;color:#858585">Normal</div>
<svg style="left:1791px;top:792px" width="8" height="5" viewBox="0 0 8 5"><path d="M0.500 0.500L4 4L7.500 0.500" stroke="#6e6e6e" fill="none" stroke-width="1.100"/></svg>
<div class="t" style="left:1808px;top:789px;font-size:10px;color:#858585">Opacidad:</div>
<div class="a" style="left:1858px;top:785px;width:50px;height:17px;background:#4d4d4d;border:1px solid #5c5c5c;border-radius:3px"></div>
<div class="a" style="left:1893px;top:786px;width:1px;height:15px;background:#5c5c5c"></div>
<div class="t" style="left:1863px;top:789px;font-size:10px;color:#777">100%</div>
<svg style="left:1897px;top:792px" width="8" height="5" viewBox="0 0 8 5"><path d="M0.500 0.500L4 4L7.500 0.500" stroke="#6e6e6e" fill="none" stroke-width="1.100"/></svg>
<div class="a" style="left:1635px;top:807px;width:285px;height:1px;background:#484848"></div>
<!-- lock row -->
<div class="t" style="left:1641px;top:817px;font-size:10px;color:#d8d8d8">Bloq.:</div>
<svg style="left:1676px;top:816px" width="11" height="11" viewBox="0 0 11 11"><rect x="0.500" y="0.500" width="10" height="10" fill="none" stroke="#ddd" stroke-width="1"/><path d="M1 1h3v3h-3zM7 1h3v3h-3zM4 4h3v3h-3zM1 7h3v3h-3zM7 7h3v3h-3z" fill="#ddd"/></svg>
<svg style="left:1697px;top:815px" width="13" height="13" viewBox="0 0 13 13"><path d="M12 0.500C9.500 2.500 7 5.500 5.500 8L7 9.500C9 7.500 11.200 4 12.500 1Z" fill="#ddd"/><path d="M5 8.500C3.200 8.300 3 10 1 12C3.500 12.800 6.500 11.500 6.500 10Z" fill="#ddd"/></svg>
<svg style="left:1719px;top:815px" width="13" height="13" viewBox="0 0 13 13"><path d="M6.500 1.500V11.500M1.500 6.500H11.500" stroke="#ddd" stroke-width="1.100"/><path d="M6.500 0L8.500 2.500H4.500ZM6.500 13L8.500 10.500H4.500ZM0 6.500L2.500 4.500V8.500ZM13 6.500L10.500 4.500V8.500Z" fill="#ddd"/></svg>
<svg style="left:1741px;top:815px" width="14" height="14" viewBox="0 0 14 14"><path d="M3 0V11H14M0 3H11V14" fill="none" stroke="#ddd" stroke-width="1.200"/><path d="M5 1.500h2M9 1.500h2M12.500 3v2M12.500 7v2" stroke="#ddd" stroke-width="1"/></svg>
<svg style="left:1765px;top:815px" width="11" height="13" viewBox="0 0 11 13"><path d="M3 6V3.800A2.500 2.500 0 0 1 8 3.800V6" fill="none" stroke="#ddd" stroke-width="1.400"/><rect x="1" y="5.500" width="9" height="7" rx="1" fill="#ddd"/></svg>
<div class="t" style="left:1819px;top:817px;font-size:10px;color:#858585">Relleno:</div>
<div class="a" style="left:1858px;top:813px;width:50px;height:17px;background:#4d4d4d;border:1px solid #5c5c5c;border-radius:3px"></div>
<div class="a" style="left:1893px;top:814px;width:1px;height:15px;background:#5c5c5c"></div>
<div class="t" style="left:1863px;top:817px;font-size:10px;color:#777">100%</div>
<svg style="left:1897px;top:820px" width="8" height="5" viewBox="0 0 8 5"><path d="M0.500 0.500L4 4L7.500 0.500" stroke="#6e6e6e" fill="none" stroke-width="1.100"/></svg>
<!-- list -->
<div class="a" style="left:1903px;top:837px;width:17px;height:178px;background:#4a4a4a"></div>
<div class="a" style="left:1665px;top:918px;width:238px;height:41px;background:#6b6b6b"></div>
<div class="a" style="left:1635px;top:876px;width:268px;height:1px;background:#434343"></div>
<div class="a" style="left:1635px;top:917px;width:268px;height:1px;background:#434343"></div>
<div class="a" style="left:1635px;top:958px;width:268px;height:1px;background:#434343"></div>
<div class="a" style="left:1635px;top:999px;width:268px;height:1px;background:#434343"></div>
<div class="a" style="left:1664px;top:837px;width:1px;height:163px;background:#434343"></div>
<!-- eyes -->
<svg style="left:1644px;top:853px" width="14" height="10" viewBox="0 0 14 10"><path d="M0.500 5C3 0.800 11 0.800 13.500 5C11 9.200 3 9.200 0.500 5Z" fill="#e8e8e8"/><circle cx="7" cy="5" r="2.600" fill="#535353"/><circle cx="7" cy="5" r="1.200" fill="#e8e8e8"/></svg>
<svg style="left:1644px;top:976px" width="14" height="10" viewBox="0 0 14 10"><path d="M0.500 5C3 0.800 11 0.800 13.500 5C11 9.200 3 9.200 0.500 5Z" fill="#e8e8e8"/><circle cx="7" cy="5" r="2.600" fill="#535353"/><circle cx="7" cy="5" r="1.200" fill="#e8e8e8"/></svg>
<div class="a" style="left:1643px;top:892px;width:13px;height:13px;border:1px solid #474747;border-right-color:#727272;border-bottom-color:#727272"></div>
<div class="a" style="left:1643px;top:933px;width:13px;height:13px;border:1px solid #474747;border-right-color:#727272;border-bottom-color:#727272"></div>
<!-- thumbs -->
<div class="a" style="left:1669px;top:842px;width:22px;height:32px;border:1px solid #2a2a2a;background-color:#fff;background-image:linear-gradient(45deg,#ccc 25%,transparent 25%,transparent 75%,#ccc 75%),linear-gradient(45deg,#ccc 25%,transparent 25%,transparent 75%,#ccc 75%);background-size:8px 8px;background-position:0 0,4px 4px"></div>
<svg style="left:1670px;top:843px" width="20" height="30" viewBox="0 0 20 30"><path d="M3 5h2v1h-2zM7 8h3v1h-3zM12 4h2v2h-2zM5 12h2v2h-2zM10 13h4v1h-4zM14 9h2v2h-2zM3 18h3v1h-3zM8 20h2v2h-2zM13 18h3v2h-3zM5 24h4v1h-4zM11 25h3v2h-3zM15 22h2v1h-2zM2 27h2v1h-2zM9 16h1v2h-1z" fill="#8e8e8e" opacity="0.75"/></svg>
<div class="a" style="left:1669px;top:883px;width:22px;height:32px;border:1px solid #2a2a2a;background:#0c0c0c"></div>
<svg style="left:1670px;top:884px" width="20" height="30" viewBox="0 0 20 30"><rect width="20" height="3" fill="#3f86b8"/><rect y="3" width="20" height="7" fill="#efe9dc"/><path d="M0 4h6v2h-6zM9 3h5v2h-5z" fill="#a9c6d6"/><path d="M13 3h5l2 3v6h-6l-2-4z" fill="#e9a32c"/><path d="M15 5h3v4h-3z" fill="#f2d9a0"/><path d="M0 10h20v14h-20z" fill="#0d0d0d"/><path d="M2 10h5v3h-5z" fill="#e8e2d2"/><path d="M2 12h4v6h-4z" fill="#24466b"/><path d="M3 11h2v2h-2z" fill="#d9a45a"/><path d="M8 12h5v7h-5z" fill="#6b4a22"/><path d="M9 11h3v3h-3z" fill="#c98a2c"/><path d="M13 9h5v7h-5z" fill="#d18a1e"/><path d="M10 16h2v2h-2z" fill="#2f8a57"/><path d="M0 22h7v3h-7z" fill="#e8e2d2"/><path d="M5 23h15v7h-15z" fill="#e09a22"/><path d="M8 24h4v3h-4zM14 25h4v3h-4z" fill="#8a5a1a"/><path d="M0 25h5v5h-5z" fill="#c98a2c"/><path d="M10 26h2v2h-2zM15 26h2v1h-2z" fill="#f0c46a"/></svg>
<div class="a" style="left:1669px;top:924px;width:22px;height:32px;border:1px solid #2a2a2a;background-color:#fff;background-image:linear-gradient(45deg,#ccc 25%,transparent 25%,transparent 75%,#ccc 75%),linear-gradient(45deg,#ccc 25%,transparent 25%,transparent 75%,#ccc 75%);background-size:8px 8px;background-position:0 0,4px 4px"></div>
<svg style="left:1670px;top:925px" width="20" height="30" viewBox="0 0 20 30"><path d="M0 2L4 3L7 7L12 8L15 5L20 4V9L14 12L8 11L3 9L0 8Z" fill="#e6a02a"/><path d="M0 26L5 25L7 28L3 30H0Z" fill="#c98a2c"/></svg>
<svg style="left:1667px;top:922px" width="26" height="36" viewBox="0 0 26 36"><path d="M0.500 6V0.500H6M20 0.500H25.500V6M25.500 30V35.500H20M6 35.500H0.500V30" fill="none" stroke="#fff" stroke-width="1"/></svg>
<div class="a" style="left:1669px;top:965px;width:22px;height:32px;border:1px solid #2a2a2a;background:#fff"></div>
<div class="t" style="left:1699px;top:853px;font-size:10px;color:#f0f0f0">Capa 1</div>
<div class="t" style="left:1699px;top:894px;font-size:10px;color:#f0f0f0">Capa 3</div>
<div class="t" style="left:1699px;top:935px;font-size:10px;color:#f0f0f0">Capa 2</div>
<div class="t" style="left:1699px;top:976px;font-size:10px;color:#f0f0f0">Capa 4</div>
<!-- footer -->
<div class="a" style="left:1635px;top:1015px;width:285px;height:1px;background:#434343"></div>
<svg style="left:1716px;top:1022px" width="15" height="9" viewBox="0 0 15 9"><rect x="0.600" y="1.100" width="7" height="6.500" rx="3.200" fill="none" stroke="#8a8a8a" stroke-width="1.200"/><rect x="7.400" y="1.100" width="7" height="6.500" rx="3.200" fill="none" stroke="#8a8a8a" stroke-width="1.200"/><path d="M4.500 4.400H10.500" stroke="#8a8a8a" stroke-width="1.200"/></svg>
<div class="t" style="left:1745px;top:1019px;font-size:14px;font-style:italic;font-family:'Liberation Serif',serif;color:#e0e0e0">fx</div>
<svg style="left:1756px;top:1032px" width="4" height="3" viewBox="0 0 4 3"><path d="M0 0h4l-2 2.500z" fill="#ddd"/></svg>
<svg style="left:1771px;top:1021px" width="13" height="11" viewBox="0 0 13 11"><rect x="0" y="0" width="13" height="11" rx="1" fill="#ddd"/><circle cx="6.500" cy="5.500" r="3" fill="#535353"/></svg>
<svg style="left:1799px;top:1021px" width="12" height="12" viewBox="0 0 12 12"><circle cx="6" cy="6" r="5" fill="none" stroke="#ddd" stroke-width="1.200"/><path d="M9.600 2.400A5 5 0 0 1 2.400 9.600Z" fill="#ddd"/></svg>
<svg style="left:1810px;top:1032px" width="4" height="3" viewBox="0 0 4 3"><path d="M0 0h4l-2 2.500z" fill="#ddd"/></svg>
<svg style="left:1825px;top:1021px" width="14" height="11" viewBox="0 0 14 11"><path d="M0 1Q0 0 1 0H5L6.500 1.500H13Q14 1.500 14 2.500V10Q14 11 13 11H1Q0 11 0 10Z" fill="#c8c8c8"/></svg>
<svg style="left:1853px;top:1021px" width="12" height="12" viewBox="0 0 12 12"><rect x="0.600" y="0.600" width="10.800" height="10.800" rx="1" fill="none" stroke="#ddd" stroke-width="1.200"/><path d="M6 3V9M3 6H9" stroke="#ddd" stroke-width="1.200"/></svg>
<svg style="left:1879px;top:1020px" width="12" height="13" viewBox="0 0 12 13"><path d="M0.500 2.500H11.500M4 2.500V0.600H8V2.500" fill="none" stroke="#ddd" stroke-width="1.200"/><path d="M1.800 3L2.500 12.400H9.500L10.200 3" fill="none" stroke="#ddd" stroke-width="1.200"/><path d="M4.500 5V10.500M6 5V10.500M7.500 5V10.500" stroke="#ddd" stroke-width="0.900"/></svg>


</body>
</html>
